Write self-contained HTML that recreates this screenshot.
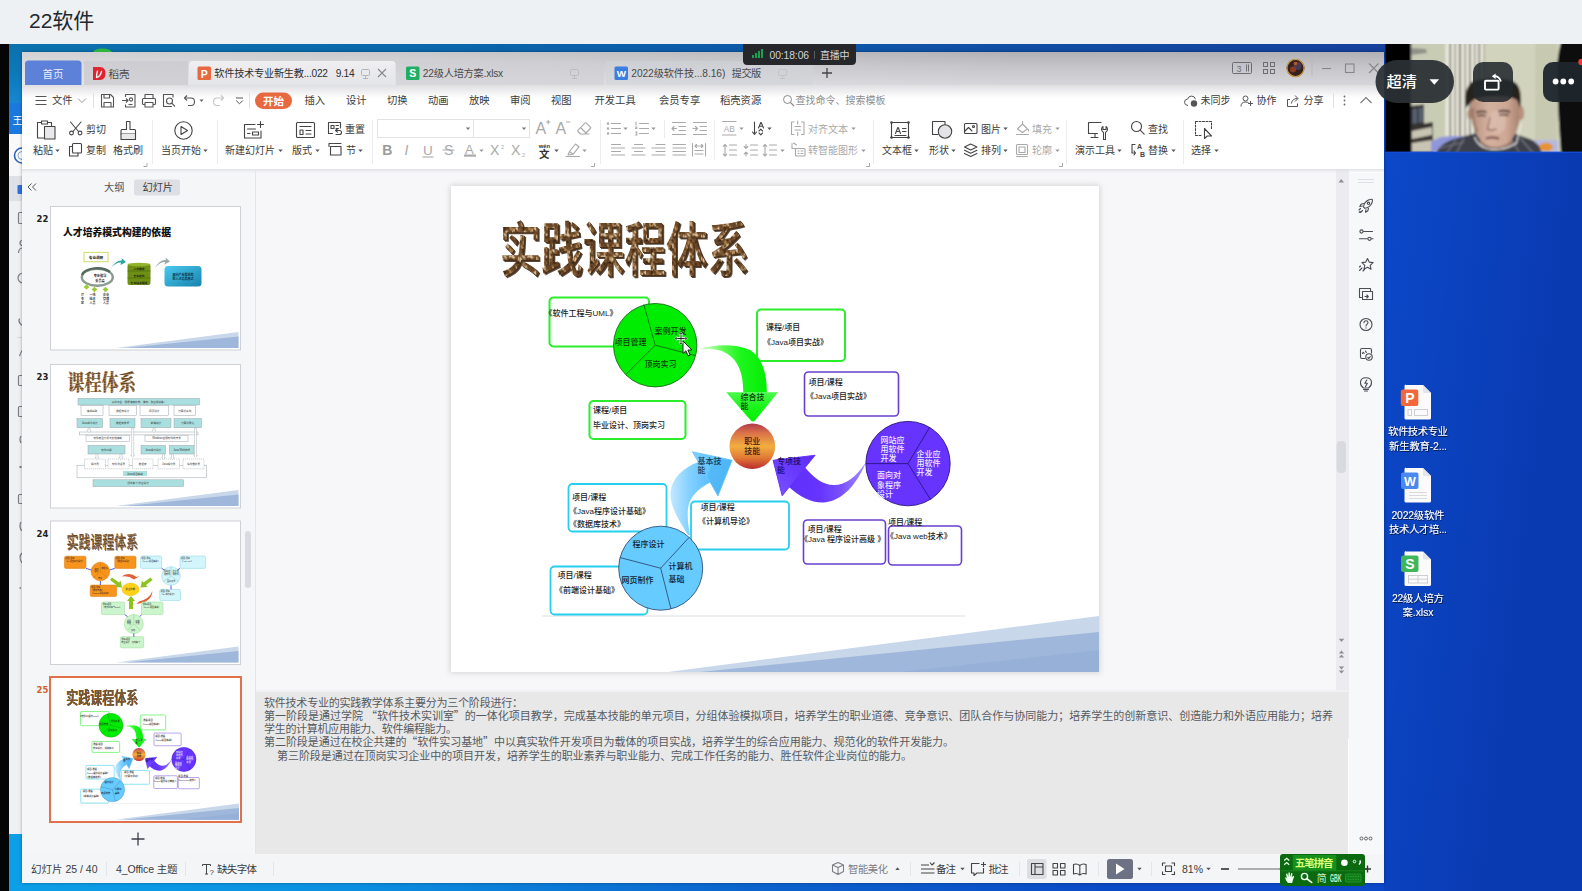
<!DOCTYPE html>
<html lang="zh-CN">
<head>
<meta charset="utf-8">
<title>22软件</title>
<style>
*{box-sizing:border-box;margin:0;padding:0}
html,body{width:1582px;height:891px;overflow:hidden;background:#edf1f4}
body{position:relative;font-family:"Liberation Sans","Noto Sans CJK SC",sans-serif;color:#333;font-size:11px;line-height:1}
.abs{position:absolute}
.t{position:absolute;white-space:nowrap;line-height:1}
svg{position:absolute;overflow:visible}
#topbar{left:0;top:0;width:1582px;height:44px;background:#edf1f4}
#topbar .ttl{left:29px;top:10px;font-size:21px;color:#23272e;letter-spacing:0}
#video{left:0;top:44px;width:1582px;height:847px;background:linear-gradient(97deg,#0c49ca 0,#0c49ca 1380px,#0b43c0 1460px,#0a3ab2 1582px);overflow:hidden}
#blk{left:0;top:0;width:9px;height:847px;background:#050505}
#desk-top{left:9px;top:0;width:1377px;height:14px;background:linear-gradient(90deg,#0b72ad 0%,#0b68ab 30%,#0e55a8 60%,#15409c 100%)}
#desk-left{left:9px;top:0;width:14px;height:790px;background:linear-gradient(180deg,#0b70ad 0,#0d79bb 30px,#1687d2 59px,#1b78de 59px,#1b78de 90px,#fafafb 90px,#f6f6f8 132px,#dfe0e5 132px,#dfe0e5 157px,#eff0f2 157px,#eff0f2 100%)}
#desk-left2{left:9px;top:790px;width:14px;height:57px;background:#0c9ee6}
#desk-bot{left:9px;top:838px;width:1375px;height:9px;background:linear-gradient(90deg,#0c9fe7 0%,#0b8fe0 25%,#0b62cc 55%,#0b4ac6 80%,#0c49ca 100%)}
#wps{left:22px;top:8px;width:1362px;height:831px;background:#fff;overflow:hidden;box-shadow:0 0 3px rgba(0,0,0,.35)}
#titlebar{left:0;top:0;width:1362px;height:36px;background:linear-gradient(90deg,rgba(255,255,255,.42) 0,rgba(255,255,255,.3) 400px,rgba(255,255,255,0) 1000px),linear-gradient(180deg,#b1b1b5 0%,#c5c5c9 40%,#d9d9dd 100%)}
#menubar{left:0;top:36px;width:1362px;height:28px;background:#fff}
#ribbon{left:0;top:64px;width:1362px;height:53px;background:#fff}
#ribshadow{left:0;top:117px;width:1362px;height:4px;background:linear-gradient(180deg,#e1e2e6,rgba(245,246,248,0))}
#leftpanel{left:0;top:117px;width:233px;height:685px;background:#f5f6f8}
#edit{left:233px;top:117px;width:1081px;height:685px;background:#f7f7f9;border-left:1px solid #e6e6e9}
#vscroll{left:1314px;top:117px;width:13px;height:570px;background:#ececf0}
#rside{left:1327px;top:121px;width:35px;height:681px;background:#f7f8fa}
#notes{left:234px;top:638px;width:1092px;height:164px;background:#e8e8e9;border-top:2px solid #f1f1f3}
#status{left:0;top:802px;width:1362px;height:29px;background:#f4f5f7}
#slide{left:429px;top:134px;width:648px;height:486px;background:#fff;box-shadow:0 0 6px 1px rgba(0,0,0,.14)}
</style>
</head>
<body>
<div id="topbar" class="abs"><div class="t ttl">22软件</div></div>
<div id="video" class="abs">
<div id="blk" class="abs"></div>
<div id="desk-top" class="abs"></div>
<div id="desk-left" class="abs"></div>
<svg width="14" height="800" viewBox="9 44 14 800" style="left:9px;top:0"><text x="12.500" y="123.500" font-size="10" fill="#fff" font-family="Liberation Sans, Noto Sans CJK SC, sans-serif">王</text><circle cx="22" cy="155.500" r="7.500" fill="#fff" stroke="#2a62b8" stroke-width="1.600"/><circle cx="22" cy="155.500" r="4" fill="none" stroke="#7a9ad0" stroke-width="1"/><rect x="17.500" y="185" width="6" height="9" rx="1" fill="#2f6fe0"/><g fill="none" stroke="#7b7d84" stroke-width="1.200"><rect x="18.500" y="212.500" width="6" height="11" rx="1"/><circle cx="22.500" cy="243" r="2.500"/><path d="M18.500,253q0,-5 4.500,-5"/><circle cx="23" cy="278" r="5"/><path d="M19.500,318.500q-1.500,3 1,5.500l2,1.500"/><path d="M19.500,356q1.500,-4 3,-6"/><rect x="18.500" y="375.500" width="6" height="10" rx="1"/><rect x="18.500" y="406.500" width="6" height="10" rx="1"/><path d="M21,436q-2,3 0,7"/><path d="M19.500,467h2" stroke-width="2"/><rect x="18.500" y="494.500" width="6" height="9" rx="1"/><path d="M21,522q-2,3 0,8l3,1"/><path d="M22,553q-4,4 0,10"/><path d="M19.500,588h1.500" stroke-width="1.600"/></g><path d="M17,337.500h6" stroke="#d8d9dd" stroke-width="1"/></svg>
<div id="desk-left2" class="abs"></div>
<div id="desk-bot" class="abs"></div>
<div id="wps" class="abs">
<div id="titlebar" class="abs"></div>
<div id="menubar" class="abs"></div>
<div id="ribbon" class="abs"></div>
<div id="leftpanel" class="abs"></div>
<div id="edit" class="abs"></div>
<div id="vscroll" class="abs"></div>
<div id="rside" class="abs"></div>
<div id="notes" class="abs"></div>
<div id="status" class="abs"></div>
<div id="ribshadow" class="abs"></div>
<div id="slide" class="abs"></div>
</div><!--/wps-->
</div><!--/video-->
<svg width="1582" height="891" viewBox="0 0 1582 891" style="left:0;top:0" font-family="Liberation Sans, Noto Sans CJK SC, sans-serif">
<defs><linearGradient id="mbg" x1="0" y1="0" x2="0" y2="1"><stop offset="0" stop-color="#dfdfe2"/><stop offset="1" stop-color="#ffffff"/></linearGradient><linearGradient id="atab" x1="0" y1="0" x2="0" y2="1"><stop offset="0" stop-color="#efeff2"/><stop offset="1" stop-color="#e4e5e8"/></linearGradient></defs>
<rect x="22" y="85" width="1362" height="13" fill="url(#mbg)"/>
<path d="M25,85V64q0,-3.5 3.500,-3.500H78q3.500,0 3.500,3.500V85z" fill="#5d80d8"/>
<text x="53" y="77.5" font-size="10.5" fill="#e9eefc" text-anchor="middle">首页</text>
<rect x="84" y="61" width="104" height="24" fill="#c9cacf" opacity=".75"/>
<path d="M93,67h7q5.500,0 5.500,6.500t-5.500,6.500h-7z" fill="#e0242f"/>
<path d="M96.500,77.500c0,-3 .5,-5 1,-6.500M96.800,77.500c1.500,-.5 4,-2.500 4.700,-6.200" stroke="#fff" stroke-width="1.300" fill="none" stroke-linecap="round"/>
<text x="108.5" y="77.5" font-size="10.5" fill="#4a4a4a">稻壳</text>
<path d="M189,85V64.500q0,-3.500 3.500,-3.500H392q3.500,0 3.500,3.500V85z" fill="url(#atab)"/>
<rect x="197.500" y="66.500" width="13.500" height="13.500" rx="1.500" fill="#e8683f"/>
<text x="204.3" y="77.5" font-size="10.5" fill="#fff" font-weight="bold" text-anchor="middle">P</text>
<text x="214.3" y="77.3" font-size="10.2" fill="#2f2f2f" textLength="113.7" lengthAdjust="spacing">软件技术专业新生教...022</text>
<text x="335.8" y="77.3" font-size="10.2" fill="#2f2f2f" textLength="18.8" lengthAdjust="spacing">9.14</text>
<g stroke="#b4b5ba" stroke-width="1" fill="none"><rect x="361.500" y="69.500" width="8" height="6" rx="1"/><path d="M365.500,75.500v2.500M363,78.500h5"/></g>
<path d="M378,69l8,8M386,69l-8,8" stroke="#8a8a8a" stroke-width="1.100"/>
<rect x="396" y="61" width="208" height="24" fill="#cdced3" opacity=".55"/>
<rect x="406" y="66.500" width="13.500" height="13.500" rx="1.500" fill="#1fae64"/>
<text x="412.8" y="77.4" font-size="10.5" fill="#fff" font-weight="bold" text-anchor="middle">S</text>
<text x="422.7" y="77.3" font-size="10.2" fill="#4a4a4a" textLength="80.5" lengthAdjust="spacing">22级人培方案.xlsx</text>
<g stroke="#bcbdc2" stroke-width="1" fill="none"><rect x="570.500" y="69.500" width="8" height="6" rx="1"/><path d="M574.500,75.500v2.500M572,78.500h5"/></g>
<rect x="606" y="61" width="207" height="24" fill="#d2d3d8" opacity=".55"/>
<rect x="614.500" y="66.500" width="13.500" height="13.500" rx="1.500" fill="#3b7ee2"/>
<text x="621.3" y="77.3" font-size="9.8" fill="#fff" font-weight="bold" text-anchor="middle">W</text>
<text x="631.3" y="77.3" font-size="10.2" fill="#4a4a4a" textLength="94" lengthAdjust="spacing">2022级软件技...8.16)</text>
<text x="731.8" y="77.3" font-size="10.2" fill="#4a4a4a" textLength="29.4" lengthAdjust="spacing">提交版</text>
<g stroke="#c3c4c9" stroke-width="1" fill="none"><rect x="778.500" y="69.500" width="8" height="6" rx="1"/><path d="M782.500,75.500v2.500M780,78.500h5"/></g>
<path d="M822,73h10M827,68v10" stroke="#44464c" stroke-width="1.300"/>
<g stroke="#6d6e74" stroke-width="1" fill="none"><rect x="1232.500" y="62.500" width="19" height="11" rx="1"/><path d="M1246.500,64.500v7M1248.500,64.500v7"/></g>
<text x="1236.5" y="72" font-size="9" fill="#6d6e74">3</text>
<g stroke="#6d6e74" stroke-width="1" fill="none"><rect x="1263.500" y="62.500" width="4" height="4"/><rect x="1270.500" y="62.500" width="4" height="4"/><rect x="1263.500" y="69.500" width="4" height="4"/><rect x="1270.500" y="69.500" width="4" height="4"/></g>
<circle cx="1295.500" cy="68" r="9" fill="#35201c"/><circle cx="1295.500" cy="68" r="8.600" fill="none" stroke="#c79a4a" stroke-width="1.300"/><circle cx="1297.500" cy="66" r="4" fill="#4a3a55"/><circle cx="1293" cy="69.500" r="3" fill="#8a3a22"/><circle cx="1295.500" cy="63.500" r="1.800" fill="#b5582a"/>
<path d="M1312,60v16" stroke="#b9b9bd" stroke-width="1"/>
<path d="M1322,68.500h9" stroke="#85868c" stroke-width="1.100"/>
<rect x="1345.500" y="64" width="8.500" height="8.500" fill="none" stroke="#85868c" stroke-width="1.100"/>
<path d="M1369,63.500l9.500,9.500M1378.500,63.500l-9.500,9.500" stroke="#85868c" stroke-width="1.100"/>
<path d="M35.500,96.500h11M35.500,100.500h11M35.500,104.500h11" stroke="#555" stroke-width="1.100"/>
<text x="52" y="104.3" font-size="10.3" fill="#3b3b3b">文件</text>
<path d="M78,98.500l4,4l4,-4" stroke="#999" stroke-width="1" fill="none"/>
<path d="M93.500,93v15M249.500,93v15" stroke="#e2e2e5" stroke-width="1"/>
<g stroke="#555" stroke-width="1.100" fill="none" stroke-linejoin="round"><path d="M101.500,94.500h9l3,3v9.500h-12z"/><path d="M104,94.500v3.500h5.500v-3.500M104,107v-4.500h7v4.500"/><path d="M125.500,97v-2.500h9.500v12.500h-9.500v-2.500"/><path d="M122,100.500h6M126,98.500l2,2l-2,2"/><circle cx="131" cy="99.500" r="1.600"/><path d="M128.500,104.500h4"/><path d="M145,98.500v-4h8v4"/><rect x="142.500" y="98.500" width="13" height="6" rx="1"/><path d="M145,102.500h8v4.500h-8z" fill="#fff"/><path d="M172,106.500h-8.500v-12h9.500v3"/><circle cx="169.500" cy="101" r="3"/><path d="M171.700,103.200l3.300,3.300"/><path d="M187,95.500l-2.500,2.500l2.500,2.500"/><path d="M185,98h6q3.500,0 3.500,3.800t-3.500,3.700h-3"/></g>
<path d="M199.5,99.5h4l-2,2.4z" fill="#666"/>
<g stroke="#c4c4c4" stroke-width="1.100" fill="none" stroke-linejoin="round"><path d="M221,95.500l2.500,2.500l-2.500,2.500"/><path d="M223,98h-6q-3.500,0 -3.500,3.800t3.500,3.700h3"/></g>
<path d="M236,98h7" stroke="#555" stroke-width="1"/><path d="M236.200,100.500l3.300,3.300l3.300,-3.300" stroke="#555" stroke-width="1" fill="none"/>
<rect x="255" y="92.500" width="37" height="16.500" rx="8.250" fill="#e8683f"/>
<text x="273.5" y="104.5" font-size="10.5" fill="#fff" font-weight="bold" text-anchor="middle">开始</text>
<text x="304.5" y="104.3" font-size="10.3" fill="#3b3b3b">插入</text>
<text x="346" y="104.3" font-size="10.3" fill="#3b3b3b">设计</text>
<text x="387" y="104.3" font-size="10.3" fill="#3b3b3b">切换</text>
<text x="428" y="104.3" font-size="10.3" fill="#3b3b3b">动画</text>
<text x="469" y="104.3" font-size="10.3" fill="#3b3b3b">放映</text>
<text x="510" y="104.3" font-size="10.3" fill="#3b3b3b">审阅</text>
<text x="551" y="104.3" font-size="10.3" fill="#3b3b3b">视图</text>
<text x="594.5" y="104.3" font-size="10.3" fill="#3b3b3b">开发工具</text>
<text x="659" y="104.3" font-size="10.3" fill="#3b3b3b">会员专享</text>
<text x="720" y="104.3" font-size="10.3" fill="#3b3b3b">稻壳资源</text>
<circle cx="787.500" cy="99.500" r="4" stroke="#8b8b8b" stroke-width="1" fill="none"/><path d="M790.500,102.500l3.500,3.500" stroke="#8b8b8b" stroke-width="1.100"/>
<text x="795.5" y="104.3" font-size="10" fill="#8d8d8d">查找命令、搜索模板</text>
<g stroke="#555" stroke-width="1" fill="none"><path d="M1188,105.500q-3.500,-.3 -3.500,-3.300q0,-2.800 3,-3.100q1,-3 4,-3q3.300,0 4,3.200"/><circle cx="1194" cy="103.500" r="3.200" fill="#555" stroke="none"/></g>
<text x="1200.5" y="104.3" font-size="10" fill="#3b3b3b">未同步</text>
<g stroke="#555" stroke-width="1" fill="none"><circle cx="1245.500" cy="98.500" r="2.500"/><path d="M1241,106.500q0,-4.500 4.500,-4.500q2.500,0 3.500,1.500M1250.500,101v5M1248,103.500h5"/></g>
<text x="1256.5" y="104.3" font-size="10" fill="#3b3b3b">协作</text>
<g stroke="#555" stroke-width="1" fill="none" stroke-linejoin="round"><path d="M1290,99.500h-2.500v7h10v-3"/><path d="M1291.500,103.500q.5,-5 6,-5M1295,95.500l3,3l-3,3"/></g>
<text x="1303.5" y="104.3" font-size="10" fill="#3b3b3b">分享</text>
<path d="M1333.500,93v15" stroke="#e2e2e5"/>
<circle cx="1344.500" cy="96.500" r=".9" fill="#666"/><circle cx="1344.500" cy="100.500" r=".9" fill="#666"/><circle cx="1344.500" cy="104.500" r=".9" fill="#666"/>
<path d="M1360.500,103l5.500,-5.500l5.500,5.500" stroke="#777" stroke-width="1.100" fill="none"/>
<g stroke="#444" stroke-width="1.100" fill="none" stroke-linejoin="round" stroke-linecap="round"><path d="M41,122.500h-3.500v15.500h6"/><path d="M41.500,121h6v3h-6z"/><path d="M48,122.500h3.500v3"/><rect x="44.500" y="126.500" width="10.500" height="12.500" fill="#e9e9ec"/></g>
<text x="33" y="154" font-size="10" fill="#3b3b3b">粘贴</text>
<path d="M55.3,149.4h4.4l-2.2,2.64z" fill="#555"/>
<g stroke="#444" stroke-width="1.100" fill="none" stroke-linejoin="round" stroke-linecap="round"><path d="M70.500,122l8,9.500M81,122l-8,9.500"/><circle cx="71.500" cy="133" r="1.900"/><circle cx="80" cy="133" r="1.900"/></g>
<text x="86" y="132.5" font-size="10" fill="#3b3b3b">剪切</text>
<g stroke="#444" stroke-width="1.100" fill="none" stroke-linejoin="round" stroke-linecap="round"><rect x="72.500" y="143.500" width="9" height="9.500" rx="1" /><path d="M72.500,146.500h-3v9.500h8.500v-3"/></g>
<text x="86" y="154" font-size="10" fill="#3b3b3b">复制</text>
<g stroke="#444" stroke-width="1.100" fill="none" stroke-linejoin="round" stroke-linecap="round"><path d="M126.500,121.500h3.500v8h4.500q1,0 1,1v3.500h-14.500v-3.500q0,-1 1,-1h4.500z"/><path d="M121,134v5.500h14.500v-5.500" fill="#e9e9ec"/></g>
<text x="113" y="154" font-size="10" fill="#3b3b3b">格式刷</text>
<path d="M143.500,166.500h3.500v-3.500" stroke="#aaa" fill="none"/>
<path d="M152.500,120v44M217.500,120v44M372.500,120v44M600.500,120v44M873.500,120v44M1066.500,120v44M1183.500,120v44" stroke="#ececef" stroke-width="1"/>
<g stroke="#444" stroke-width="1.100" fill="none" stroke-linejoin="round" stroke-linecap="round"><circle cx="183.500" cy="130.500" r="8.700"/><path d="M181,126.500v8l6.500,-4z"/></g>
<text x="161" y="154" font-size="10" fill="#3b3b3b">当页开始</text>
<path d="M203.3,149.4h4.4l-2.2,2.64z" fill="#555"/>
<g stroke="#444" stroke-width="1.100" fill="none" stroke-linejoin="round" stroke-linecap="round"><path d="M255,124.500h-10.500v13.500h16.500v-7"/><path d="M247.500,129h8M247.500,133.500h2.500M252.500,132h6v3h-6z"/><path d="M257.500,124.500h6M260.500,121.500v6"/></g>
<text x="225" y="154" font-size="10" fill="#3b3b3b">新建幻灯片</text>
<path d="M278.3,149.4h4.4l-2.2,2.64z" fill="#555"/>
<g stroke="#444" stroke-width="1.100" fill="none" stroke-linejoin="round" stroke-linecap="round"><rect x="296.500" y="122.500" width="18" height="15" rx="1"/><path d="M300,126.500h11M300,130h3v4.500h-3zM306,130.500h5M306,134h5"/></g>
<text x="292" y="154" font-size="10" fill="#3b3b3b">版式</text>
<path d="M315.3,149.4h4.4l-2.2,2.64z" fill="#555"/>
<g stroke="#444" stroke-width="1.100" fill="none" stroke-linejoin="round" stroke-linecap="round"><path d="M340.500,128v-5.500h-12v11h4"/><path d="M331,125.500h3v3h-3zM336,125.500h2.500M336,128.500h2.500"/><path d="M336,134.500h3.500q2,0 2,-2t-2,-2h-3.500M337.500,128.800l-2,1.700l2,1.700"/></g>
<text x="345" y="132.5" font-size="10" fill="#3b3b3b">重置</text>
<g stroke="#444" stroke-width="1.100" fill="none" stroke-linejoin="round" stroke-linecap="round"><rect x="330.500" y="146.500" width="10.500" height="8.500"/><path d="M329,143.500h3.500M333.500,143.500h7.500M329,143.500v3"/></g>
<text x="346" y="154" font-size="10" fill="#3b3b3b">节</text>
<path d="M358.3,149.4h4.4l-2.2,2.64z" fill="#555"/>
<rect x="377.500" y="119.500" width="96" height="18" fill="#fff" stroke="#e3e3e6"/><rect x="473.500" y="119.500" width="56" height="18" fill="#fff" stroke="#e3e3e6"/>
<path d="M465.8,127.4h4.4l-2.2,2.64z" fill="#777"/>
<path d="M521.8,127.4h4.4l-2.2,2.64z" fill="#777"/>
<text x="535.5" y="134.3" font-size="16" fill="#a9a9a9" font-family="Liberation Sans, sans-serif">A</text>
<text x="555.5" y="134.3" font-size="16" fill="#a9a9a9" font-family="Liberation Sans, sans-serif">A</text>
<g stroke="#a9a9a9" stroke-width="1.100" fill="none" stroke-linejoin="round" stroke-linecap="round"><path d="M546.500,122h3.500M548.200,120.300v3.500"/><path d="M566.500,122h3.500"/><path d="M582,134h-1.500l-2.500,-2.500q-.7,-.7 0,-1.400l7,-7q.7,-.7 1.400,0l4,4q.7,.7 0,1.400l-5.500,5.500h-3M580.500,127.500l5,5M582,134h7"/></g>
<text x="382.3" y="155.3" font-size="14" fill="#9a9a9a" font-weight="bold" font-family="Liberation Sans, sans-serif">B</text>
<text x="404.5" y="155.3" font-size="14" fill="#a9a9a9" font-style="italic" font-family="Liberation Sans, sans-serif">I</text>
<text x="423" y="154.8" font-size="13.5" fill="#a9a9a9" font-family="Liberation Sans, sans-serif">U</text>
<path d="M422.500,157h11" stroke="#a9a9a9" stroke-width="1.100"/>
<text x="444" y="155.3" font-size="14" fill="#a9a9a9" font-family="Liberation Sans, sans-serif">S</text>
<path d="M442.500,150h12" stroke="#a9a9a9" stroke-width="1"/>
<text x="465" y="153.8" font-size="13" fill="#a9a9a9" font-family="Liberation Sans, sans-serif">A</text>
<text x="490" y="155.3" font-size="14" fill="#a9a9a9" font-family="Liberation Sans, sans-serif">X</text>
<text x="511" y="155.3" font-size="14" fill="#a9a9a9" font-family="Liberation Sans, sans-serif">X</text>
<rect x="464" y="154.500" width="12" height="2.200" fill="#a9a9a9"/>
<path d="M479.3,149.4h4.4l-2.2,2.64z" fill="#999"/>
<text x="501" y="149" font-size="5.5" fill="#a9a9a9">2</text>
<text x="522" y="157" font-size="5.5" fill="#a9a9a9">2</text>
<text x="544.3" y="148.3" font-size="5.8" fill="#333" font-weight="bold" text-anchor="middle">wén</text>
<text x="544.3" y="157.8" font-size="10.5" fill="#333" font-weight="bold" text-anchor="middle">文</text>
<path d="M554.3,149.4h4.4l-2.2,2.64z" fill="#555"/>
<g stroke="#a9a9a9" stroke-width="1.100" fill="none" stroke-linejoin="round" stroke-linecap="round"><path d="M569.500,151.500l6,-7.500l3.500,2.800l-6,7.500zM569.500,151.500l-1.500,3.500l4.500,-.8"/><path d="M566,156.500h13.500"/></g>
<path d="M582.3,149.4h4.4l-2.2,2.64z" fill="#999"/>
<path d="M591,166.500h3.500v-3.500M866,166.500h3.500v-3.500M1059,166.500h3.500v-3.500" stroke="#aaa" fill="none"/>
<g stroke="#a9a9a9" stroke-width="1.100" fill="none" stroke-linejoin="round" stroke-linecap="round"><path d="M611.500,123.500h9M611.500,128.500h9M611.500,133.500h9"/><circle cx="608" cy="123.500" r=".7"/><circle cx="608" cy="128.500" r=".7"/><circle cx="608" cy="133.500" r=".7"/><path d="M639.500,123.500h9M639.500,128.500h9M639.500,133.500h9"/><path d="M636,122v3M635.500,127h1.300v1.500h-1.300M635.500,132h1.300v3h-1.300"/><path d="M672.500,122.500h13M679,126.500h6.500M679,130.500h6.500M672.500,134.500h13M676.500,128.500h-4.500M674,126.500l-2,2l2,2"/><path d="M693.500,122.500h13M700,126.500h6.500M700,130.500h6.500M693.500,134.500h13M693,128.500h4.500M695.500,126.500l2,2l-2,2"/><path d="M611.500,144.500h9M611.500,148h13M611.500,151.500h9M611.500,155h13"/><path d="M634.500,144.500h8M632,148h13M634.500,151.500h8M632,155h13"/><path d="M656,144.500h9M652,148h13M656,151.500h9M652,155h13"/><path d="M673,144.500h12.500M673,148h12.500M673,151.500h12.500M673,155h12.500"/><path d="M692.500,143.500v12.500M705.500,143.500v12.500M695,146h8M696.500,144.500l-1.500,1.500l1.500,1.500M701.500,144.500l1.500,1.500l-1.500,1.500M695,150.500h8M695,154h8"/><path d="M722.500,121.500h13.500M722.500,135h13.500"/><path d="M729.500,145h7M729.500,150h7M729.500,155h7M725,144.500v11.500M723.200,146.300l1.800,-1.800l1.800,1.800M723.200,154.200l1.800,1.800l1.800,-1.800"/><path d="M750.500,145h7M750.500,150h7M750.500,155h7M746,144.500v4M744.200,146.500l1.800,1.800l1.800,-1.800M746,156v-4M744.200,154l1.800,-1.800l1.800,1.800"/><path d="M769.500,145h7M769.500,150h7M769.500,155h7M765,144.500v11.500M763.200,146.300l1.800,-1.800l1.800,1.800M763.200,154.200l1.800,1.800l1.800,-1.800"/><path d="M794,122h-2.500v12.500h2.500M801.500,122h2.500v12.500h-2.500M795,126.500h5.500M795,130h5.500M797.700,121v3M797.700,135.500v-3"/><path d="M792,143.500v5h4M793.500,143l3,2" /><rect x="795.500" y="148.500" width="9.500" height="7.500" rx="1"/><path d="M798,151h1M801,151h2M798,153.500h1M801,153.500h2"/></g>
<text x="723.8" y="132.3" font-size="8.3" fill="#a9a9a9">AB</text>
<path d="M623.3,127.4h4.4l-2.2,2.64z" fill="#999"/>
<path d="M651.3,127.4h4.4l-2.2,2.64z" fill="#999"/>
<path d="M739.3,127.4h4.4l-2.2,2.64z" fill="#999"/>
<path d="M780.3,149.4h4.4l-2.2,2.64z" fill="#999"/>
<path d="M664.500,120v18M714.500,120v40" stroke="#ececef"/>
<g stroke="#444" stroke-width="1.100" fill="none" stroke-linejoin="round" stroke-linecap="round"><path d="M754.500,122v12M752.500,132l2,2.300l2,-2.300"/><path d="M758.500,128l2.300,-5.500h.4l2.300,5.500M759.300,126.300h3.300"/><path d="M759,131l1.800,-1.800l1.800,1.800M759,133l1.800,1.800l1.800,-1.800"/></g>
<path d="M767.3,127.4h4.4l-2.2,2.64z" fill="#555"/>
<text x="808" y="132.5" font-size="10" fill="#a9a9a9">对齐文本</text>
<path d="M851.3,127.4h4.4l-2.2,2.64z" fill="#999"/>
<text x="808" y="154" font-size="10" fill="#a9a9a9">转智能图形</text>
<path d="M861.3,149.4h4.4l-2.2,2.64z" fill="#999"/>
<g stroke="#444" stroke-width="1.100" fill="none" stroke-linejoin="round" stroke-linecap="round"><rect x="891.500" y="122.500" width="17" height="15"/><path d="M895.500,133.500l2.300,-6h.4l2.300,6M896.300,131.500h3.400M902.500,128.500h3.500M902.500,131.500h3.500M895,135.500h11"/></g>
<g fill="#444"><circle cx="891.500" cy="122.500" r="1.300"/><circle cx="908.500" cy="122.500" r="1.300"/><circle cx="891.500" cy="137.500" r="1.300"/><circle cx="908.500" cy="137.500" r="1.300"/></g>
<text x="882" y="154" font-size="10" fill="#3b3b3b">文本框</text>
<path d="M914.3,149.4h4.4l-2.2,2.64z" fill="#555"/>
<g stroke="#444" stroke-width="1.100" fill="none" stroke-linejoin="round" stroke-linecap="round"><path d="M938,134.500h-5.500v-13h12.500v3"/><circle cx="945" cy="131.500" r="6.700" fill="#e3e3e8"/></g>
<text x="929" y="154" font-size="10" fill="#3b3b3b">形状</text>
<path d="M951.3,149.4h4.4l-2.2,2.64z" fill="#555"/>
<g stroke="#444" stroke-width="1.100" fill="none" stroke-linejoin="round" stroke-linecap="round"><rect x="964.500" y="123.500" width="12.500" height="10" rx="1"/><path d="M964.500,131.500l4,-4l3.500,3.500"/><circle cx="973.500" cy="126.500" r="1"/></g>
<text x="981" y="132.5" font-size="10" fill="#3b3b3b">图片</text>
<path d="M1003.3,127.4h4.4l-2.2,2.64z" fill="#555"/>
<g stroke="#444" stroke-width="1.100" fill="none" stroke-linejoin="round" stroke-linecap="round"><path d="M964.500,147l6.200,-3l6.200,3l-6.200,3zM964.500,150.200l6.200,3l6.200,-3M964.500,153.400l6.200,3l6.200,-3"/></g>
<text x="981" y="154" font-size="10" fill="#3b3b3b">排列</text>
<path d="M1003.3,149.4h4.4l-2.2,2.64z" fill="#555"/>
<g stroke="#a9a9a9" stroke-width="1.100" fill="none" stroke-linejoin="round" stroke-linecap="round"><path d="M1017.500,129l5,-5l5,5l-5,3.500zM1022.500,124v-2.500M1028.500,129.500v1.500"/><path d="M1016.500,134.500h12"/></g>
<text x="1032" y="132.5" font-size="10" fill="#a9a9a9">填充</text>
<path d="M1055.3,127.4h4.4l-2.2,2.64z" fill="#999"/>
<g stroke="#a9a9a9" stroke-width="1.100" fill="none" stroke-linejoin="round" stroke-linecap="round"><rect x="1016.500" y="144.500" width="11" height="10" rx="1"/><path d="M1019,147h6v5.500h-6z"/><path d="M1016.500,156.500h11"/></g>
<text x="1032" y="154" font-size="10" fill="#a9a9a9">轮廓</text>
<path d="M1055.3,149.4h4.4l-2.2,2.64z" fill="#999"/>
<g stroke="#444" stroke-width="1.100" fill="none" stroke-linejoin="round" stroke-linecap="round"><path d="M1101,122.500h-12.500v11h9"/><path d="M1095,133.500v4M1091,137.500h7"/><path d="M1103.500,139.500v-7q-2,-1 -2,-3.200q0,-1.800 1.500,-2.800v3h3v-3q1.500,1 1.500,2.800q0,2.200 -2,3.200v7z" fill="#fff"/></g>
<text x="1075" y="154" font-size="10" fill="#3b3b3b">演示工具</text>
<path d="M1117.3,149.4h4.4l-2.2,2.64z" fill="#555"/>
<g stroke="#444" stroke-width="1.100" fill="none" stroke-linejoin="round" stroke-linecap="round"><circle cx="1136.500" cy="126.500" r="5"/><path d="M1140.200,130.200l4,4"/></g>
<text x="1148" y="132.5" font-size="10" fill="#3b3b3b">查找</text>
<g stroke="#444" stroke-width="1.100" fill="none" stroke-linejoin="round" stroke-linecap="round"><path d="M1135,144.500h-3v8.500h2.500M1134,151l1.500,2l-1.500,2"/></g>
<text x="1137" y="149" font-size="7" fill="#444" font-weight="bold">A</text>
<text x="1140" y="157" font-size="7" fill="#444" font-weight="bold">B</text>
<text x="1148" y="154" font-size="10" fill="#3b3b3b">替换</text>
<path d="M1171.3,149.4h4.4l-2.2,2.64z" fill="#555"/>
<g stroke="#444" stroke-width="1.100" fill="none" stroke-linejoin="round" stroke-linecap="round"><path d="M1195.500,121.500h16v7M1195.500,121.500v14h6" stroke-dasharray="2 1.500"/><path d="M1204.500,128.500v10l2.800,-2.500l4.200,0z" fill="#fff"/></g>
<text x="1191" y="154" font-size="10" fill="#3b3b3b">选择</text>
<path d="M1214.3,149.4h4.4l-2.2,2.64z" fill="#555"/>
</svg>
<svg width="648" height="486" viewBox="0 0 648 486" style="left:451px;top:186px">
<defs>
<linearGradient id="mwood" x1="0" y1="0" x2="0" y2="1"><stop offset="0" stop-color="#6b4423"/><stop offset=".25" stop-color="#b98a58"/><stop offset=".45" stop-color="#7a4f2a"/><stop offset=".65" stop-color="#c39a6b"/><stop offset=".85" stop-color="#6a4120"/><stop offset="1" stop-color="#a77b4c"/></linearGradient>
<pattern id="mtex" width="26" height="22" patternUnits="userSpaceOnUse"><rect width="26" height="22" fill="#6a4827"/><ellipse cx="11.8" cy="12.3" rx="3.0" ry="1.0" fill="#8d6239" transform="rotate(15 11.8 12.3)"/><ellipse cx="4.8" cy="11.3" rx="2.4" ry="1.3" fill="#4a2f16" transform="rotate(100 4.8 11.3)"/><ellipse cx="7.9" cy="2.0" rx="2.8" ry="1.2" fill="#3a2410" transform="rotate(80 7.9 2.0)"/><ellipse cx="25.1" cy="14.4" rx="2.4" ry="0.7" fill="#3a2410" transform="rotate(-10 25.1 14.4)"/><ellipse cx="1.5" cy="4.2" rx="1.5" ry="0.6" fill="#e0c8a0" transform="rotate(60 1.5 4.2)"/><ellipse cx="11.5" cy="18.5" rx="2.1" ry="1.2" fill="#e0c8a0" transform="rotate(-25 11.5 18.5)"/><ellipse cx="17.2" cy="10.1" rx="1.6" ry="1.5" fill="#4a2f16" transform="rotate(30 17.2 10.1)"/><ellipse cx="8.2" cy="5.1" rx="1.6" ry="0.7" fill="#4a2f16" transform="rotate(80 8.2 5.1)"/><ellipse cx="2.8" cy="6.4" rx="1.1" ry="0.6" fill="#3a2410" transform="rotate(15 2.8 6.4)"/><ellipse cx="5.5" cy="20.0" rx="2.0" ry="1.5" fill="#b08352" transform="rotate(80 5.5 20.0)"/><ellipse cx="1.9" cy="13.8" rx="2.7" ry="0.8" fill="#4a2f16" transform="rotate(30 1.9 13.8)"/><ellipse cx="8.6" cy="21.2" rx="2.7" ry="0.7" fill="#d8ba90" transform="rotate(-10 8.6 21.2)"/><ellipse cx="0.3" cy="10.2" rx="2.1" ry="1.2" fill="#d8ba90" transform="rotate(100 0.3 10.2)"/><ellipse cx="13.2" cy="21.7" rx="2.7" ry="1.0" fill="#b08352" transform="rotate(-10 13.2 21.7)"/><ellipse cx="10.3" cy="21.8" rx="1.0" ry="1.4" fill="#432a13" transform="rotate(30 10.3 21.8)"/><ellipse cx="25.9" cy="0.4" rx="1.4" ry="1.5" fill="#432a13" transform="rotate(-10 25.9 0.4)"/><ellipse cx="1.1" cy="3.2" rx="2.0" ry="0.6" fill="#432a13" transform="rotate(60 1.1 3.2)"/><ellipse cx="21.6" cy="8.5" rx="1.2" ry="0.8" fill="#d8ba90" transform="rotate(-25 21.6 8.5)"/><ellipse cx="15.6" cy="8.2" rx="2.0" ry="1.5" fill="#e0c8a0" transform="rotate(0 15.6 8.2)"/><ellipse cx="22.5" cy="4.0" rx="1.3" ry="1.4" fill="#432a13" transform="rotate(15 22.5 4.0)"/><ellipse cx="18.9" cy="3.5" rx="2.4" ry="1.1" fill="#b08352" transform="rotate(100 18.9 3.5)"/><ellipse cx="15.7" cy="9.3" rx="1.2" ry="0.6" fill="#5b3a1c" transform="rotate(15 15.7 9.3)"/><ellipse cx="19.2" cy="8.6" rx="1.9" ry="1.4" fill="#e0c8a0" transform="rotate(30 19.2 8.6)"/><ellipse cx="13.5" cy="20.4" rx="3.1" ry="0.7" fill="#e0c8a0" transform="rotate(-10 13.5 20.4)"/><ellipse cx="7.3" cy="20.2" rx="1.4" ry="0.6" fill="#5b3a1c" transform="rotate(80 7.3 20.2)"/><ellipse cx="11.6" cy="1.3" rx="1.4" ry="0.9" fill="#432a13" transform="rotate(0 11.6 1.3)"/><ellipse cx="2.4" cy="3.0" rx="2.0" ry="0.9" fill="#8d6239" transform="rotate(0 2.4 3.0)"/><ellipse cx="15.3" cy="20.3" rx="2.0" ry="0.9" fill="#5b3a1c" transform="rotate(-25 15.3 20.3)"/><ellipse cx="0.6" cy="14.0" rx="2.1" ry="1.3" fill="#2e1c0c" transform="rotate(0 0.6 14.0)"/><ellipse cx="26.0" cy="1.7" rx="2.2" ry="1.3" fill="#c9a67a" transform="rotate(60 26.0 1.7)"/><ellipse cx="9.1" cy="15.1" rx="3.0" ry="1.4" fill="#b08352" transform="rotate(-25 9.1 15.1)"/><ellipse cx="22.5" cy="12.6" rx="2.4" ry="0.9" fill="#432a13" transform="rotate(-25 22.5 12.6)"/><ellipse cx="15.8" cy="1.8" rx="2.4" ry="1.5" fill="#b08352" transform="rotate(60 15.8 1.8)"/><ellipse cx="10.1" cy="16.2" rx="2.3" ry="1.0" fill="#8d6239" transform="rotate(-10 10.1 16.2)"/><ellipse cx="13.5" cy="11.3" rx="1.7" ry="0.7" fill="#3a2410" transform="rotate(15 13.5 11.3)"/><ellipse cx="24.9" cy="2.5" rx="2.7" ry="1.2" fill="#e0c8a0" transform="rotate(30 24.9 2.5)"/><ellipse cx="23.3" cy="8.1" rx="1.3" ry="1.2" fill="#8d6239" transform="rotate(0 23.3 8.1)"/><ellipse cx="19.6" cy="7.5" rx="3.0" ry="1.0" fill="#d8ba90" transform="rotate(60 19.6 7.5)"/><ellipse cx="10.5" cy="5.5" rx="2.4" ry="1.3" fill="#d8ba90" transform="rotate(15 10.5 5.5)"/><ellipse cx="10.0" cy="12.8" rx="1.7" ry="0.7" fill="#e0c8a0" transform="rotate(60 10.0 12.8)"/><ellipse cx="21.8" cy="18.7" rx="2.6" ry="1.5" fill="#5b3a1c" transform="rotate(0 21.8 18.7)"/><ellipse cx="2.9" cy="10.4" rx="3.0" ry="1.3" fill="#b08352" transform="rotate(100 2.9 10.4)"/><ellipse cx="17.5" cy="15.8" rx="2.9" ry="1.2" fill="#2e1c0c" transform="rotate(-10 17.5 15.8)"/><ellipse cx="21.5" cy="6.1" rx="2.3" ry="1.2" fill="#5b3a1c" transform="rotate(60 21.5 6.1)"/><ellipse cx="8.0" cy="17.4" rx="1.0" ry="0.7" fill="#e0c8a0" transform="rotate(15 8.0 17.4)"/><ellipse cx="0.6" cy="18.3" rx="1.5" ry="0.7" fill="#3a2410" transform="rotate(-10 0.6 18.3)"/><ellipse cx="11.6" cy="13.9" rx="2.4" ry="1.3" fill="#4a2f16" transform="rotate(15 11.6 13.9)"/><ellipse cx="5.2" cy="10.5" rx="1.4" ry="0.6" fill="#e0c8a0" transform="rotate(-25 5.2 10.5)"/><ellipse cx="4.7" cy="6.0" rx="1.8" ry="1.2" fill="#8d6239" transform="rotate(0 4.7 6.0)"/><ellipse cx="10.2" cy="17.4" rx="3.0" ry="0.7" fill="#b08352" transform="rotate(0 10.2 17.4)"/><ellipse cx="11.7" cy="4.3" rx="3.0" ry="0.6" fill="#8d6239" transform="rotate(60 11.7 4.3)"/><ellipse cx="12.1" cy="14.3" rx="1.5" ry="1.2" fill="#4a2f16" transform="rotate(15 12.1 14.3)"/><ellipse cx="6.3" cy="8.6" rx="1.2" ry="0.9" fill="#2e1c0c" transform="rotate(30 6.3 8.6)"/><ellipse cx="23.7" cy="18.8" rx="1.8" ry="0.7" fill="#e0c8a0" transform="rotate(60 23.7 18.8)"/><ellipse cx="14.3" cy="16.9" rx="2.1" ry="0.6" fill="#4a2f16" transform="rotate(80 14.3 16.9)"/><ellipse cx="20.8" cy="3.8" rx="1.7" ry="1.3" fill="#c9a67a" transform="rotate(100 20.8 3.8)"/><ellipse cx="3.9" cy="11.4" rx="2.6" ry="1.4" fill="#e0c8a0" transform="rotate(100 3.9 11.4)"/><ellipse cx="15.1" cy="15.2" rx="2.7" ry="1.0" fill="#8d6239" transform="rotate(30 15.1 15.2)"/><ellipse cx="21.6" cy="12.4" rx="1.4" ry="1.1" fill="#8d6239" transform="rotate(30 21.6 12.4)"/><ellipse cx="8.1" cy="8.4" rx="2.9" ry="1.4" fill="#d8ba90" transform="rotate(30 8.1 8.4)"/></pattern>
<linearGradient id="mga" x1="0" y1="0" x2="1" y2="0"><stop offset="0" stop-color="#b8ffb0" stop-opacity=".55"/><stop offset=".3" stop-color="#6dfc60"/><stop offset=".6" stop-color="#1df61d"/><stop offset="1" stop-color="#04ee04"/></linearGradient>
<linearGradient id="mgh" x1="0" y1="0" x2="0" y2="1"><stop offset="0" stop-color="#4cfb4c"/><stop offset=".45" stop-color="#1ef41e"/><stop offset="1" stop-color="#00f000"/></linearGradient>
<linearGradient id="mba" x1="0" y1="0" x2="1" y2="0"><stop offset="0" stop-color="#c4e8ff"/><stop offset=".45" stop-color="#86d2ff"/><stop offset="1" stop-color="#58beff"/></linearGradient>
<linearGradient id="mbh" x1="0" y1="0" x2="1" y2="0.400"><stop offset="0" stop-color="#7fd0ff"/><stop offset=".5" stop-color="#66c6ff"/><stop offset=".52" stop-color="#55baf8"/><stop offset="1" stop-color="#4db5f5"/></linearGradient>
<linearGradient id="mpa" x1="1" y1="0" x2="0" y2="0"><stop offset="0" stop-color="#a38cff"/><stop offset=".3" stop-color="#7a52ff"/><stop offset=".6" stop-color="#6633ff"/><stop offset="1" stop-color="#6030f8"/></linearGradient><linearGradient id="mph" x1="0" y1="1" x2="1" y2="0"><stop offset="0" stop-color="#7c55ff"/><stop offset=".5" stop-color="#6a3cff"/><stop offset="1" stop-color="#5d2cf4"/></linearGradient>
<linearGradient id="msp" x1="0" y1="0" x2="0" y2="1"><stop offset="0" stop-color="#b03a4a"/><stop offset=".2" stop-color="#d9704a"/><stop offset=".5" stop-color="#f3ae3f"/><stop offset=".75" stop-color="#e27a35"/><stop offset="1" stop-color="#b82a2e"/></linearGradient>
<linearGradient id="mdeco" x1="0" y1="0" x2="1" y2="0"><stop offset="0" stop-color="#c9d7ea"/><stop offset="1" stop-color="#b3c6e3"/></linearGradient>
</defs>
<rect width="648" height="486" fill="#fff"/>
<polygon points="217,486 648,430 648,486" fill="#c9d7ea"/>
<polygon points="249,486 648,446 648,486" fill="#9fb7db"/>
<polygon points="449,486 648,464 648,486" fill="#93add6" opacity=".7"/>
<line x1="91" y1="430" x2="514" y2="430" stroke="#dde0e4" stroke-width="1.200"/>
<g transform="translate(48.5,84.5) scale(0.705,1)" font-family="Noto Sans CJK SC, sans-serif" font-weight="500" font-size="59"><text x="3" y="2.200" fill="#2e1c0e" opacity=".8">实践课程体系</text><text x="1.500" y="1.100" fill="#4a2e16">实践课程体系</text><text x="0" y="0" fill="url(#mtex)">实践课程体系</text></g>
<rect x="98.5" y="111.5" width="99.5" height="49.0" rx="4" fill="#fff" stroke="#2bee2b" stroke-width="2"/>
<rect x="306" y="123.5" width="88" height="51.5" rx="4" fill="#fff" stroke="#2bee2b" stroke-width="2"/>
<rect x="138.5" y="215" width="96.0" height="38" rx="4" fill="#fff" stroke="#2bee2b" stroke-width="2"/>
<rect x="353.5" y="186" width="94.0" height="44" rx="4" fill="#fff" stroke="#6a3fd0" stroke-width="1.6"/>
<rect x="117.5" y="298" width="98.0" height="47.5" rx="4" fill="#fff" stroke="#27cfee" stroke-width="1.8"/>
<rect x="240" y="315.5" width="98" height="48.0" rx="4" fill="#fff" stroke="#27cfee" stroke-width="1.8"/>
<rect x="99.5" y="380.5" width="97.0" height="48.0" rx="4" fill="#fff" stroke="#27cfee" stroke-width="1.8"/>
<rect x="352.5" y="334" width="82.0" height="44" rx="4" fill="#fff" stroke="#6a3fd0" stroke-width="1.6"/>
<rect x="437.5" y="340" width="73.0" height="39" rx="4" fill="#fff" stroke="#6a3fd0" stroke-width="1.6"/>
<path d="M249,162.6C264,158.5 284,157.5 299,164C312,172 316,189 315.8,206.5L292.3,206.5C292.3,186 287,172 271,165C264,163 257,163 249,163.2Z" fill="url(#mga)"/>
<path d="M275.2,206.2L327,206.2L304,234.5Q301.9,236.5 299.8,234.5Z" fill="url(#mgh)"/>
<path d="M237,349C229,336 218,319 219.5,306C221,292 232,282 246.8,276.2L259.3,296.2C246,303 238.5,312 237,322C236,332 237.5,341 239,349Z" fill="url(#mba)"/>
<polygon points="241.4,265.8 281.1,274.2 267,309.9" fill="url(#mbh)" stroke="#62c3fd" stroke-width=".8" stroke-linejoin="round"/>
<path d="M414,277.5C405,291 395,299 383,299C371,299 362,291 353.8,281L337.3,300.5C349,311 360,317 373,316.5C391,315 405,299 414,278.5Z" fill="url(#mpa)"/>
<polygon points="322.1,274.3 364.1,269.3 331.2,309.7" fill="url(#mph)" stroke="#6535fb" stroke-width="1" stroke-linejoin="round"/>
<circle cx="301.3" cy="260.3" r="22.800" fill="url(#msp)"/>
<circle cx="204.2" cy="159.2" r="41.7" fill="#00ec00" stroke="#156b15" stroke-width=".9"/><line x1="204.2" y1="159.2" x2="192.8" y2="118.3" stroke="#156b15" stroke-width=".9"/><line x1="204.2" y1="159.2" x2="244.3" y2="169.5" stroke="#156b15" stroke-width=".9"/><line x1="204.2" y1="159.2" x2="175" y2="188.3" stroke="#156b15" stroke-width=".9"/>
<circle cx="457" cy="277.6" r="42.2" fill="#6633ff" stroke="#2a1680" stroke-width=".9"/><line x1="457" y1="277.6" x2="478.5" y2="241.5" stroke="#2a1680" stroke-width=".9"/><line x1="457" y1="277.6" x2="415" y2="277.6" stroke="#2a1680" stroke-width=".9"/><line x1="457" y1="277.6" x2="479.5" y2="313.5" stroke="#2a1680" stroke-width=".9"/>
<circle cx="209.7" cy="382.2" r="42" fill="#66ccff" stroke="#2d4f78" stroke-width=".9"/><line x1="209.7" y1="382.2" x2="238" y2="351.5" stroke="#2d4f78" stroke-width=".9"/><line x1="209.7" y1="382.2" x2="168.8" y2="371.5" stroke="#2d4f78" stroke-width=".9"/><line x1="209.7" y1="382.2" x2="220" y2="423" stroke="#2d4f78" stroke-width=".9"/>
<g font-family="Liberation Sans, Noto Sans CJK SC, sans-serif" font-weight="500"><text x="93.5" y="129.5" font-size="8" fill="#222">《软件工程与UML》</text><text x="203.5" y="148" font-size="8" fill="#0c3d0c">案例开发</text><text x="163.5" y="158.5" font-size="8" fill="#0c3d0c">项目管理</text><text x="193.5" y="180.5" font-size="8" fill="#0c3d0c">顶岗实习</text><text x="315" y="144" font-size="8" fill="#222">课程/项目</text><text x="312.0" y="158.5" font-size="8" fill="#222">《Java项目实战》</text><text x="357.5" y="198.5" font-size="8" fill="#222">项目/课程</text><text x="355.0" y="212.5" font-size="8" fill="#222">《Java项目实战》</text><text x="142" y="227" font-size="8" fill="#222">课程/项目</text><text x="142" y="241.5" font-size="8" fill="#222">毕业设计、顶岗实习</text><text x="289.5" y="214" font-size="8" fill="#0c3d0c">综合技</text><text x="289.5" y="222.5" font-size="8" fill="#0c3d0c">能</text><text x="301.3" y="258" font-size="8" fill="#3a1a10" text-anchor="middle">职业</text><text x="301.3" y="267.5" font-size="8" fill="#3a1a10" text-anchor="middle">技能</text><text x="246.5" y="278" font-size="8" fill="#173a55">基本技</text><text x="246.5" y="287" font-size="8" fill="#173a55">能</text><text x="326" y="278" font-size="8" fill="#1d0c5c">专项技</text><text x="326" y="287" font-size="8" fill="#1d0c5c">能</text><text x="429.5" y="256.5" font-size="8" fill="#eee8ff">网站应</text><text x="429.5" y="265.7" font-size="8" fill="#eee8ff">用软件</text><text x="429.5" y="274.9" font-size="8" fill="#eee8ff">开发</text><text x="465.5" y="271.0" font-size="8" fill="#eee8ff">企业应</text><text x="465.5" y="280.2" font-size="8" fill="#eee8ff">用软件</text><text x="465.5" y="289.4" font-size="8" fill="#eee8ff">开发</text><text x="426" y="292.0" font-size="8" fill="#eee8ff">面向对</text><text x="426" y="301.5" font-size="8" fill="#eee8ff">象程序</text><text x="426" y="311.0" font-size="8" fill="#eee8ff">设计</text><text x="121" y="313.5" font-size="8" fill="#222">项目/课程</text><text x="118.0" y="327.5" font-size="8" fill="#222">《Java程序设计基础》</text><text x="118.0" y="341" font-size="8" fill="#222">《数据库技术》</text><text x="249.5" y="324" font-size="8" fill="#222">项目/课程</text><text x="247.0" y="338" font-size="8" fill="#222">《计算机导论》</text><text x="181.5" y="360.5" font-size="8" fill="#123">程序设计</text><text x="217.5" y="382.5" font-size="8" fill="#123">计算机</text><text x="217.5" y="396" font-size="8" fill="#123">基础</text><text x="170.5" y="396.5" font-size="8" fill="#123">网页制作</text><text x="106.5" y="392" font-size="8" fill="#222">项目/课程</text><text x="104.0" y="406.5" font-size="8" fill="#222">《前端设计基础》</text><text x="356.5" y="346" font-size="8" fill="#222">项目/课程</text><text x="349.0" y="355.5" font-size="8" fill="#222">《Java 程序设计高级 》</text><text x="437" y="338.5" font-size="8" fill="#222">项目/课程</text><text x="435.0" y="352.5" font-size="8" fill="#222">《Java web技术》</text></g>
<g transform="translate(232,155)"><path d="M0,0v12.500l2.900,-2.700l2.300,5.200l2,-.9l-2.300,-5.100h4z" fill="#fff" stroke="#111" stroke-width=".9"/><path d="M-7,-2.500h10M-2,-7.500v10" stroke="#fff" stroke-width="2.600"/><path d="M-7,-2.500h10M-2,-7.500v10" stroke="#222" stroke-width="1"/><path d="M-8.500,-2.500l2.500,-2v4zM4.500,-2.500l-2.500,-2v4zM-2,-9l-2,2.500h4zM-2,4l-2,-2.500h4z" fill="#222" stroke="#fff" stroke-width=".5"/></g>
</svg>
<svg width="260" height="720" viewBox="0 160 260 720" style="left:0;top:160px" font-family="Liberation Sans, Noto Sans CJK SC, sans-serif">
<defs><pattern id="ttex" width="3" height="2.400" patternUnits="userSpaceOnUse" patternTransform="rotate(-8)"><rect width="3" height="2.400" fill="#6e4a28"/><rect width="3" height=".7" fill="#b08a5c"/><rect width="1.400" height=".6" x="1" y="1.400" fill="#5e3a1c"/></pattern><linearGradient id="cyb" x1="0" y1="0" x2="1" y2="1"><stop offset="0" stop-color="#4cc9f0"/><stop offset="1" stop-color="#1583ad"/></linearGradient></defs>
<path d="M31.500,183.500l-3.500,3.500l3.500,3.500M36,183.500l-3.500,3.500l3.500,3.500" stroke="#555" stroke-width="1" fill="none"/>
<text x="104" y="190.800" font-size="10.200" fill="#555">大纲</text>
<rect x="134" y="179.500" width="46" height="16" rx="2.500" fill="#dddfe4"/>
<text x="142.500" y="190.800" font-size="10.200" fill="#3b3b3b">幻灯片</text>
<rect x="245" y="531" width="6" height="57" rx="3" fill="#dadbe0"/>
<rect x="50.500" y="206.5" width="190" height="143.500" fill="#fff" stroke="#cfd0d4" stroke-width="1"/>
<text x="36.500" y="222.0" font-size="8.600" font-weight="bold" font-family="DejaVu Sans, Liberation Sans, sans-serif" fill="#222" textLength="11.800" lengthAdjust="spacingAndGlyphs">22</text>
<rect x="50.500" y="364.5" width="190" height="143.500" fill="#fff" stroke="#cfd0d4" stroke-width="1"/>
<text x="36.500" y="380.0" font-size="8.600" font-weight="bold" font-family="DejaVu Sans, Liberation Sans, sans-serif" fill="#222" textLength="11.800" lengthAdjust="spacingAndGlyphs">23</text>
<rect x="50.500" y="521" width="190" height="143.500" fill="#fff" stroke="#cfd0d4" stroke-width="1"/>
<text x="36.500" y="536.5" font-size="8.600" font-weight="bold" font-family="DejaVu Sans, Liberation Sans, sans-serif" fill="#222" textLength="11.800" lengthAdjust="spacingAndGlyphs">24</text>
<rect x="50" y="677" width="191" height="145" fill="#fff" stroke="#e0714a" stroke-width="2"/>
<text x="36.500" y="692.5" font-size="8.600" font-weight="bold" font-family="DejaVu Sans, Liberation Sans, sans-serif" fill="#d0602e" textLength="11.800" lengthAdjust="spacingAndGlyphs">25</text>
<polygon points="116,348.0 238.500,332.0 238.500,348.0" fill="#c9d7ea"/><polygon points="126,348.0 238.500,336.5 238.500,348.0" fill="#9fb7db"/>
<text x="63" y="236" font-size="9.800" font-weight="900" fill="#111" textLength="108" lengthAdjust="spacingAndGlyphs" font-family="Noto Sans CJK SC, sans-serif">人才培养模式构建的依据</text>
<rect x="84" y="252.300" width="24" height="9.500" fill="#fff" stroke="#c3d43f" stroke-width=".8"/><text x="96" y="258.800" font-size="3.600" font-weight="bold" fill="#222" text-anchor="middle">专业调研</text>
<ellipse cx="97.300" cy="277.200" rx="15.500" ry="8.500" fill="#fff" stroke="#8a9a90" stroke-width="2.400"/><path d="M82,275a15.500,8.500 0 0 1 28,-3" stroke="#566a60" stroke-width="2.400" fill="none"/>
<text x="100" y="277.300" font-size="3.200" font-weight="bold" fill="#222" text-anchor="middle">专业指导</text><text x="100" y="281.600" font-size="3.200" font-weight="bold" fill="#222" text-anchor="middle">委员会</text>
<rect x="84.5" y="285" width="4" height="4" fill="#9acd32" transform="rotate(45 86.5 287)"/>
<rect x="92.5" y="287.5" width="4" height="4" fill="#9acd32" transform="rotate(45 94.5 289.5)"/>
<rect x="103.5" y="287.5" width="4" height="4" fill="#9acd32" transform="rotate(45 105.5 289.5)"/>
<text x="82.5" y="296.0" font-size="3" font-weight="bold" fill="#333" text-anchor="middle">IT</text>
<text x="82.5" y="300.2" font-size="3" font-weight="bold" fill="#333" text-anchor="middle">专</text>
<text x="82.5" y="304.4" font-size="3" font-weight="bold" fill="#333" text-anchor="middle">家</text>
<text x="92.5" y="296.0" font-size="3" font-weight="bold" fill="#333" text-anchor="middle">一线</text>
<text x="92.5" y="300.2" font-size="3" font-weight="bold" fill="#333" text-anchor="middle">技术</text>
<text x="92.5" y="304.4" font-size="3" font-weight="bold" fill="#333" text-anchor="middle">人员</text>
<text x="106" y="296.0" font-size="3" font-weight="bold" fill="#333" text-anchor="middle">企业</text>
<text x="106" y="300.2" font-size="3" font-weight="bold" fill="#333" text-anchor="middle">管理</text>
<text x="106" y="304.4" font-size="3" font-weight="bold" fill="#333" text-anchor="middle">人员</text>
<path d="M111,268q5,-8 11,-7.500l-.5,-2.500l4.500,4l-5.500,3l.5,-2.500q-5,-.5 -10,5.500z" fill="#2ba3a0"/>
<path d="M155,268q5,-9 11,-8l-.5,-2.500l4.500,4l-5.500,3l.5,-2.500q-5,-.5 -10,6z" fill="#9aa8a8"/>
<rect x="127.500" y="264" width="23" height="21" rx="2" fill="#6e8f14"/><ellipse cx="139" cy="264.500" rx="11.500" ry="1.800" fill="#93b32a"/><path d="M127.500,271h23M127.500,278h23" stroke="#4c6a08" stroke-width=".6"/>
<text x="139" y="269.5" font-size="2.800" fill="#111" font-weight="bold" text-anchor="middle">人才需求</text>
<text x="139" y="276.5" font-size="2.800" fill="#111" font-weight="bold" text-anchor="middle">专业定位</text>
<text x="139" y="283.5" font-size="2.800" fill="#111" font-weight="bold" text-anchor="middle">专业技术领域</text>
<rect x="164.500" y="266" width="37" height="20.500" rx="3.500" fill="url(#cyb)"/><text x="183" y="275.500" font-size="3" font-weight="bold" fill="#0a2a3a" text-anchor="middle">面向产业需求的</text><text x="183" y="279.500" font-size="3" font-weight="bold" fill="#0a2a3a" text-anchor="middle">的人才培养模式</text>
<polygon points="116,506.0 238.500,490.0 238.500,506.0" fill="#c9d7ea"/><polygon points="126,506.0 238.500,494.5 238.500,506.0" fill="#9fb7db"/>
<g transform="translate(67,389.500) scale(.8,1)"><text x=".8" y=".8" font-size="21.500" font-weight="700" font-family="Noto Serif CJK SC, serif" fill="#3a2412" opacity=".4">课程体系</text><text font-size="21.500" font-weight="700" font-family="Noto Serif CJK SC, serif" fill="url(#ttex)">课程体系</text></g>
<rect x="78" y="398.4" width="121.5" height="6.6" fill="#aadfe0" stroke="#9aa4a8" stroke-width="0.5"/>
<text x="139" y="402.7" font-size="2.6" fill="#333" text-anchor="middle">公共平台（思想道德修养、体育、职业规划等）</text>
<rect x="81" y="405.6" width="22" height="9.9" fill="#fff" stroke="#9aa4a8" stroke-width="0.5"/>
<text x="92.0" y="411.5" font-size="2.6" fill="#333" text-anchor="middle">编程基础</text>
<rect x="109" y="405.6" width="27.5" height="9.9" fill="#fff" stroke="#9aa4a8" stroke-width="0.5"/>
<text x="122.75" y="411.5" font-size="2.6" fill="#333" text-anchor="middle">数据库设计</text>
<rect x="140" y="405.6" width="28.5" height="9.9" fill="#fff" stroke="#9aa4a8" stroke-width="0.5"/>
<text x="154.25" y="411.5" font-size="2.6" fill="#333" text-anchor="middle">网页设计</text>
<rect x="174" y="405.6" width="21.5" height="9.9" fill="#fff" stroke="#9aa4a8" stroke-width="0.5"/>
<text x="184.75" y="411.5" font-size="2.6" fill="#333" text-anchor="middle">计算机系统</text>
<rect x="77" y="418.7" width="25.5" height="9.0" fill="#aadfe0" stroke="#9aa4a8" stroke-width="0.5"/>
<text x="89.75" y="424.2" font-size="2.6" fill="#333" text-anchor="middle">Java程序设计</text>
<rect x="110" y="418.7" width="25" height="9.0" fill="#aadfe0" stroke="#9aa4a8" stroke-width="0.5"/>
<text x="122.5" y="424.2" font-size="2.6" fill="#333" text-anchor="middle">数据库技术</text>
<rect x="141" y="418.7" width="30" height="9.0" fill="#aadfe0" stroke="#9aa4a8" stroke-width="0.5"/>
<text x="156.0" y="424.2" font-size="2.6" fill="#333" text-anchor="middle">前端设计</text>
<rect x="174" y="418.7" width="27.5" height="9.0" fill="#aadfe0" stroke="#9aa4a8" stroke-width="0.5"/>
<text x="187.75" y="424.2" font-size="2.6" fill="#333" text-anchor="middle">计算机导论</text>
<rect x="79.5" y="432" width="118.5" height="2.9" fill="#fff" stroke="#9aa4a8" stroke-width="0.5"/>
<rect x="86" y="435.2" width="43.5" height="6.3" fill="#fff" stroke="#9aa4a8" stroke-width="0.5"/>
<text x="107.7" y="439.4" font-size="2.6" fill="#333" text-anchor="middle">软件模型分析与文档编制</text>
<rect x="145" y="435.2" width="43" height="6.3" fill="#fff" stroke="#9aa4a8" stroke-width="0.5"/>
<text x="166.5" y="439.4" font-size="2.6" fill="#333" text-anchor="middle">Windows应用软件的开发</text>
<rect x="88" y="445.5" width="37" height="8.5" fill="#aadfe0" stroke="#9aa4a8" stroke-width="0.5"/>
<text x="106.5" y="450.7" font-size="2.6" fill="#333" text-anchor="middle">软件工程</text>
<rect x="141" y="445.5" width="24.5" height="8.5" fill="#aadfe0" stroke="#9aa4a8" stroke-width="0.5"/>
<text x="153.25" y="450.7" font-size="2.6" fill="#333" text-anchor="middle">Java程序设计</text>
<rect x="169.5" y="445.5" width="24.5" height="8.5" fill="#aadfe0" stroke="#9aa4a8" stroke-width="0.5"/>
<text x="181.75" y="450.7" font-size="2.6" fill="#333" text-anchor="middle">Java Web技术</text>
<rect x="77" y="465.4" width="129.5" height="12.4" fill="#fff" stroke="#9aa4a8" stroke-width="0.5"/>
<rect x="84.5" y="459" width="21.0" height="9.8" fill="#fff" stroke="#9aa4a8" stroke-width="0.5" stroke-dasharray="1.200 .8"/>
<text x="95.0" y="465" font-size="2.6" fill="#333" text-anchor="middle">程序员</text>
<rect x="108" y="459" width="21" height="9.8" fill="#fff" stroke="#9aa4a8" stroke-width="0.5" stroke-dasharray="1.200 .8"/>
<text x="118.5" y="465" font-size="2.6" fill="#333" text-anchor="middle">软件测试员</text>
<rect x="132.5" y="459" width="20.5" height="9.8" fill="#fff" stroke="#9aa4a8" stroke-width="0.5" stroke-dasharray="1.200 .8"/>
<text x="142.75" y="465" font-size="2.6" fill="#333" text-anchor="middle">数据库</text>
<rect x="158" y="459" width="21.5" height="9.8" fill="#fff" stroke="#9aa4a8" stroke-width="0.5" stroke-dasharray="1.200 .8"/>
<text x="168.75" y="465" font-size="2.6" fill="#333" text-anchor="middle">Java程序员</text>
<rect x="183" y="459" width="21" height="9.8" fill="#fff" stroke="#9aa4a8" stroke-width="0.5" stroke-dasharray="1.200 .8"/>
<text x="193.5" y="465" font-size="2.6" fill="#333" text-anchor="middle">系统维护员</text>
<rect x="123" y="471" width="24" height="5" fill="#aadfe0" stroke="none" stroke-width="0.5"/>
<text x="135" y="474.6" font-size="2.6" fill="#333" text-anchor="middle">Java项目实战</text>
<rect x="93" y="479.8" width="90.5" height="6.8" fill="#aadfe0" stroke="#9aa4a8" stroke-width="0.5"/>
<text x="138" y="484.2" font-size="2.6" fill="#333" text-anchor="middle">顶岗实习  毕业设计</text>
<path d="M88,428v2.5h-1l2,2l2,-2h-1v-2.5z" fill="#fff" stroke="#9aa4a8" stroke-width=".4"/>
<path d="M131.7,428v27.5h-1l2,2l2,-2h-1v-27.5z" fill="#fff" stroke="#9aa4a8" stroke-width=".4"/>
<path d="M153,428v2.5h-1l2,2l2,-2h-1v-2.5z" fill="#fff" stroke="#9aa4a8" stroke-width=".4"/>
<path d="M194.5,428v27.5h-1l2,2l2,-2h-1v-27.5z" fill="#fff" stroke="#9aa4a8" stroke-width=".4"/>
<path d="M96,454v3.5h-1l2,2l2,-2h-1v-3.5z" fill="#fff" stroke="#9aa4a8" stroke-width=".4"/>
<path d="M120,454v3.5h-1l2,2l2,-2h-1v-3.5z" fill="#fff" stroke="#9aa4a8" stroke-width=".4"/>
<path d="M162.5,454v3.5h-1l2,2l2,-2h-1v-3.5z" fill="#fff" stroke="#9aa4a8" stroke-width=".4"/>
<path d="M171.5,454v3.5h-1l2,2l2,-2h-1v-3.5z" fill="#fff" stroke="#9aa4a8" stroke-width=".4"/>
<polygon points="116,662.5 238.500,646.5 238.500,662.5" fill="#c9d7ea"/><polygon points="126,662.5 238.500,651.0 238.500,662.5" fill="#9fb7db"/>
<g transform="translate(66.500,548) scale(.68,1)" font-family="Noto Sans CJK SC, sans-serif" font-weight="500" font-size="17.500"><text x="1" y=".8" fill="#3a2412" opacity=".7">实践课程体系</text><text fill="url(#ttex)">实践课程体系</text></g>
<rect x="64.5" y="556.2" width="21.5" height="12.2" rx="1.500" fill="#f7941d" stroke="#d97800" stroke-width=".5"/>
<text x="65.5" y="559" font-size="2.1" fill="#222">项目/课程</text>
<text x="65.5" y="562" font-size="2.1" fill="#222">《C 语言程序设计》</text>
<rect x="114.8" y="556.2" width="21.2" height="12.2" rx="1.500" fill="#f7941d" stroke="#d97800" stroke-width=".5"/>
<text x="115.8" y="559" font-size="2.1" fill="#222">项目/课程</text>
<text x="115.8" y="562" font-size="2.1" fill="#222">《数据库基础》</text>
<rect x="90.2" y="585" width="26.4" height="11.6" rx="1.500" fill="#f7941d" stroke="#d97800" stroke-width=".5"/>
<text x="91.2" y="588" font-size="2.1" fill="#222">项目/课程</text>
<text x="91.2" y="591" font-size="2.1" fill="#222">《数字电路》</text>
<text x="91.2" y="594" font-size="2.1" fill="#222">《Visual 基础教程》</text>
<circle cx="100.400" cy="571.500" r="9.300" fill="#f7941d" stroke="#d97800" stroke-width=".5"/><path d="M100.400,571.500v-9.300M100.400,571.500l-7,6M100.400,571.500l7,6" stroke="#c96f00" stroke-width=".4"/>
<text x="94.5" y="569.5" font-size="2.1" fill="#222">程序</text>
<text x="94.5" y="572.3" font-size="2.1" fill="#222">设计</text>
<text x="101.5" y="569" font-size="2.1" fill="#222">数据库</text>
<text x="98" y="578.5" font-size="2.1" fill="#222">电子</text>
<rect x="140.5" y="556" width="21.1" height="12.4" rx="1.500" fill="#d2f6fb" stroke="#86d3e0" stroke-width=".5"/>
<text x="141.5" y="559" font-size="2.1" fill="#222">项目/课程</text>
<text x="141.5" y="562" font-size="2.1" fill="#222">《C net 项目实战》</text>
<rect x="180" y="556" width="25.6" height="12.4" rx="1.500" fill="#d2f6fb" stroke="#86d3e0" stroke-width=".5"/>
<text x="181" y="559" font-size="2.1" fill="#222">项目/课程</text>
<text x="181" y="562" font-size="2.1" fill="#222">《Asp .net》</text>
<rect x="159.7" y="589.4" width="20.8" height="11.2" rx="1.500" fill="#d2f6fb" stroke="#86d3e0" stroke-width=".5"/>
<text x="160.7" y="592.2" font-size="2.1" fill="#222">项目/课程</text>
<text x="160.7" y="595" font-size="2.1" fill="#222">《C#程序设计》</text>
<circle cx="171" cy="576" r="9.300" fill="#d2f6fb" stroke="#86d3e0" stroke-width=".5"/><path d="M171,576v-9.300M171,576l-7.500,5.500M171,576l7.500,5.500" stroke="#7bbac5" stroke-width=".4"/>
<text x="164" y="572" font-size="2.1" fill="#222">网站应</text>
<text x="164" y="574.8" font-size="2.1" fill="#222">用软件</text>
<text x="172.5" y="572" font-size="2.1" fill="#222">企业应</text>
<text x="172.5" y="574.8" font-size="2.1" fill="#222">用软件</text>
<text x="167" y="582" font-size="2.1" fill="#222">面向对象</text>
<ellipse cx="130.600" cy="589.400" rx="8.600" ry="6.300" fill="#ffd21a" stroke="#e8b800" stroke-width=".4"/>
<text x="125.5" y="590.3" font-size="2.4" fill="#222">职业技能</text>
<path d="M110,580l2,-2.500l7,5l1.500,-2l1.500,7l-7,-.5l1.500,-2z" fill="#8dc21f"/>
<path d="M152.500,580l-2,-2.500l-7,5l-1.500,-2l-1.500,7l7,-.5l-1.500,-2z" fill="#8dc21f"/>
<path d="M129,609v-8h-2l4,-5l4,5h-2v8z" fill="#8dc21f"/>
<path d="M121.500,576.500q8,-5 15,.5l3.500,-1l-6,3.500q-6,-4.500 -12.500,-3z" fill="#e0603a"/><path d="M152.500,591q-3,8 -13.500,10.500l-2.500,2.500l7.500,-1.500q8,-3.500 8.500,-11.500z" fill="#e0603a"/>
<rect x="101.5" y="602" width="23.1" height="12.6" rx="1.500" fill="#cdf5cd" stroke="#93d893" stroke-width=".5"/>
<text x="102.5" y="605" font-size="2.1" fill="#222">课程/项目</text>
<text x="102.5" y="608" font-size="2.1" fill="#222">《软件工程与UML》</text>
<rect x="141.4" y="602" width="21.6" height="12.6" rx="1.500" fill="#cdf5cd" stroke="#93d893" stroke-width=".5"/>
<text x="142.4" y="605" font-size="2.1" fill="#222">课程/项目</text>
<text x="142.4" y="608" font-size="2.1" fill="#222">《C net 项目实战》</text>
<rect x="120.3" y="636.7" width="23.4" height="11.1" rx="1.500" fill="#cdf5cd" stroke="#93d893" stroke-width=".5"/>
<text x="121.3" y="639.7" font-size="2.1" fill="#222">课程/项目</text>
<text x="121.3" y="642.7" font-size="2.1" fill="#222">毕业设计、顶岗实习</text>
<circle cx="133.800" cy="624" r="9.500" fill="#cdf5cd" stroke="#93d893" stroke-width=".5"/><path d="M133.800,624v-9.500M133.800,624l-6,6M133.800,624l6,6" stroke="#7cc27c" stroke-width=".4"/>
<text x="127" y="621.5" font-size="2.1" fill="#222">项目</text>
<text x="127" y="624.3" font-size="2.1" fill="#222">管理</text>
<text x="135.5" y="621.5" font-size="2.1" fill="#222">案例</text>
<text x="135.5" y="624.3" font-size="2.1" fill="#222">开发</text>
<text x="131" y="630.5" font-size="2.1" fill="#222">顶岗</text>
<line x1="86" y1="568.4" x2="91.5" y2="570" stroke="#2233cc" stroke-width=".8"/>
<line x1="114.8" y1="568.4" x2="109.5" y2="570" stroke="#2233cc" stroke-width=".8"/>
<line x1="100.4" y1="581" x2="100.4" y2="585" stroke="#2233cc" stroke-width=".8"/>
<line x1="161.6" y1="568.4" x2="164.5" y2="570" stroke="#2233cc" stroke-width=".8"/>
<line x1="180" y1="568.4" x2="177.5" y2="570" stroke="#2233cc" stroke-width=".8"/>
<line x1="171" y1="585.5" x2="171" y2="589.4" stroke="#2233cc" stroke-width=".8"/>
<line x1="124.6" y1="614.6" x2="127.5" y2="616.5" stroke="#2233cc" stroke-width=".8"/>
<line x1="141.4" y1="614.6" x2="140" y2="616.5" stroke="#2233cc" stroke-width=".8"/>
<line x1="133.8" y1="633.5" x2="133.8" y2="636.7" stroke="#2233cc" stroke-width=".8"/>
</svg>
<svg width="187" height="141" viewBox="0 0 648 486" style="left:52px;top:679px">
<defs>
<linearGradient id="twood" x1="0" y1="0" x2="0" y2="1"><stop offset="0" stop-color="#6b4423"/><stop offset=".25" stop-color="#b98a58"/><stop offset=".45" stop-color="#7a4f2a"/><stop offset=".65" stop-color="#c39a6b"/><stop offset=".85" stop-color="#6a4120"/><stop offset="1" stop-color="#a77b4c"/></linearGradient>
<pattern id="ttex" width="26" height="22" patternUnits="userSpaceOnUse"><rect width="26" height="22" fill="#6a4827"/><ellipse cx="11.8" cy="12.3" rx="3.0" ry="1.0" fill="#8d6239" transform="rotate(15 11.8 12.3)"/><ellipse cx="4.8" cy="11.3" rx="2.4" ry="1.3" fill="#4a2f16" transform="rotate(100 4.8 11.3)"/><ellipse cx="7.9" cy="2.0" rx="2.8" ry="1.2" fill="#3a2410" transform="rotate(80 7.9 2.0)"/><ellipse cx="25.1" cy="14.4" rx="2.4" ry="0.7" fill="#3a2410" transform="rotate(-10 25.1 14.4)"/><ellipse cx="1.5" cy="4.2" rx="1.5" ry="0.6" fill="#e0c8a0" transform="rotate(60 1.5 4.2)"/><ellipse cx="11.5" cy="18.5" rx="2.1" ry="1.2" fill="#e0c8a0" transform="rotate(-25 11.5 18.5)"/><ellipse cx="17.2" cy="10.1" rx="1.6" ry="1.5" fill="#4a2f16" transform="rotate(30 17.2 10.1)"/><ellipse cx="8.2" cy="5.1" rx="1.6" ry="0.7" fill="#4a2f16" transform="rotate(80 8.2 5.1)"/><ellipse cx="2.8" cy="6.4" rx="1.1" ry="0.6" fill="#3a2410" transform="rotate(15 2.8 6.4)"/><ellipse cx="5.5" cy="20.0" rx="2.0" ry="1.5" fill="#b08352" transform="rotate(80 5.5 20.0)"/><ellipse cx="1.9" cy="13.8" rx="2.7" ry="0.8" fill="#4a2f16" transform="rotate(30 1.9 13.8)"/><ellipse cx="8.6" cy="21.2" rx="2.7" ry="0.7" fill="#d8ba90" transform="rotate(-10 8.6 21.2)"/><ellipse cx="0.3" cy="10.2" rx="2.1" ry="1.2" fill="#d8ba90" transform="rotate(100 0.3 10.2)"/><ellipse cx="13.2" cy="21.7" rx="2.7" ry="1.0" fill="#b08352" transform="rotate(-10 13.2 21.7)"/><ellipse cx="10.3" cy="21.8" rx="1.0" ry="1.4" fill="#432a13" transform="rotate(30 10.3 21.8)"/><ellipse cx="25.9" cy="0.4" rx="1.4" ry="1.5" fill="#432a13" transform="rotate(-10 25.9 0.4)"/><ellipse cx="1.1" cy="3.2" rx="2.0" ry="0.6" fill="#432a13" transform="rotate(60 1.1 3.2)"/><ellipse cx="21.6" cy="8.5" rx="1.2" ry="0.8" fill="#d8ba90" transform="rotate(-25 21.6 8.5)"/><ellipse cx="15.6" cy="8.2" rx="2.0" ry="1.5" fill="#e0c8a0" transform="rotate(0 15.6 8.2)"/><ellipse cx="22.5" cy="4.0" rx="1.3" ry="1.4" fill="#432a13" transform="rotate(15 22.5 4.0)"/><ellipse cx="18.9" cy="3.5" rx="2.4" ry="1.1" fill="#b08352" transform="rotate(100 18.9 3.5)"/><ellipse cx="15.7" cy="9.3" rx="1.2" ry="0.6" fill="#5b3a1c" transform="rotate(15 15.7 9.3)"/><ellipse cx="19.2" cy="8.6" rx="1.9" ry="1.4" fill="#e0c8a0" transform="rotate(30 19.2 8.6)"/><ellipse cx="13.5" cy="20.4" rx="3.1" ry="0.7" fill="#e0c8a0" transform="rotate(-10 13.5 20.4)"/><ellipse cx="7.3" cy="20.2" rx="1.4" ry="0.6" fill="#5b3a1c" transform="rotate(80 7.3 20.2)"/><ellipse cx="11.6" cy="1.3" rx="1.4" ry="0.9" fill="#432a13" transform="rotate(0 11.6 1.3)"/><ellipse cx="2.4" cy="3.0" rx="2.0" ry="0.9" fill="#8d6239" transform="rotate(0 2.4 3.0)"/><ellipse cx="15.3" cy="20.3" rx="2.0" ry="0.9" fill="#5b3a1c" transform="rotate(-25 15.3 20.3)"/><ellipse cx="0.6" cy="14.0" rx="2.1" ry="1.3" fill="#2e1c0c" transform="rotate(0 0.6 14.0)"/><ellipse cx="26.0" cy="1.7" rx="2.2" ry="1.3" fill="#c9a67a" transform="rotate(60 26.0 1.7)"/><ellipse cx="9.1" cy="15.1" rx="3.0" ry="1.4" fill="#b08352" transform="rotate(-25 9.1 15.1)"/><ellipse cx="22.5" cy="12.6" rx="2.4" ry="0.9" fill="#432a13" transform="rotate(-25 22.5 12.6)"/><ellipse cx="15.8" cy="1.8" rx="2.4" ry="1.5" fill="#b08352" transform="rotate(60 15.8 1.8)"/><ellipse cx="10.1" cy="16.2" rx="2.3" ry="1.0" fill="#8d6239" transform="rotate(-10 10.1 16.2)"/><ellipse cx="13.5" cy="11.3" rx="1.7" ry="0.7" fill="#3a2410" transform="rotate(15 13.5 11.3)"/><ellipse cx="24.9" cy="2.5" rx="2.7" ry="1.2" fill="#e0c8a0" transform="rotate(30 24.9 2.5)"/><ellipse cx="23.3" cy="8.1" rx="1.3" ry="1.2" fill="#8d6239" transform="rotate(0 23.3 8.1)"/><ellipse cx="19.6" cy="7.5" rx="3.0" ry="1.0" fill="#d8ba90" transform="rotate(60 19.6 7.5)"/><ellipse cx="10.5" cy="5.5" rx="2.4" ry="1.3" fill="#d8ba90" transform="rotate(15 10.5 5.5)"/><ellipse cx="10.0" cy="12.8" rx="1.7" ry="0.7" fill="#e0c8a0" transform="rotate(60 10.0 12.8)"/><ellipse cx="21.8" cy="18.7" rx="2.6" ry="1.5" fill="#5b3a1c" transform="rotate(0 21.8 18.7)"/><ellipse cx="2.9" cy="10.4" rx="3.0" ry="1.3" fill="#b08352" transform="rotate(100 2.9 10.4)"/><ellipse cx="17.5" cy="15.8" rx="2.9" ry="1.2" fill="#2e1c0c" transform="rotate(-10 17.5 15.8)"/><ellipse cx="21.5" cy="6.1" rx="2.3" ry="1.2" fill="#5b3a1c" transform="rotate(60 21.5 6.1)"/><ellipse cx="8.0" cy="17.4" rx="1.0" ry="0.7" fill="#e0c8a0" transform="rotate(15 8.0 17.4)"/><ellipse cx="0.6" cy="18.3" rx="1.5" ry="0.7" fill="#3a2410" transform="rotate(-10 0.6 18.3)"/><ellipse cx="11.6" cy="13.9" rx="2.4" ry="1.3" fill="#4a2f16" transform="rotate(15 11.6 13.9)"/><ellipse cx="5.2" cy="10.5" rx="1.4" ry="0.6" fill="#e0c8a0" transform="rotate(-25 5.2 10.5)"/><ellipse cx="4.7" cy="6.0" rx="1.8" ry="1.2" fill="#8d6239" transform="rotate(0 4.7 6.0)"/><ellipse cx="10.2" cy="17.4" rx="3.0" ry="0.7" fill="#b08352" transform="rotate(0 10.2 17.4)"/><ellipse cx="11.7" cy="4.3" rx="3.0" ry="0.6" fill="#8d6239" transform="rotate(60 11.7 4.3)"/><ellipse cx="12.1" cy="14.3" rx="1.5" ry="1.2" fill="#4a2f16" transform="rotate(15 12.1 14.3)"/><ellipse cx="6.3" cy="8.6" rx="1.2" ry="0.9" fill="#2e1c0c" transform="rotate(30 6.3 8.6)"/><ellipse cx="23.7" cy="18.8" rx="1.8" ry="0.7" fill="#e0c8a0" transform="rotate(60 23.7 18.8)"/><ellipse cx="14.3" cy="16.9" rx="2.1" ry="0.6" fill="#4a2f16" transform="rotate(80 14.3 16.9)"/><ellipse cx="20.8" cy="3.8" rx="1.7" ry="1.3" fill="#c9a67a" transform="rotate(100 20.8 3.8)"/><ellipse cx="3.9" cy="11.4" rx="2.6" ry="1.4" fill="#e0c8a0" transform="rotate(100 3.9 11.4)"/><ellipse cx="15.1" cy="15.2" rx="2.7" ry="1.0" fill="#8d6239" transform="rotate(30 15.1 15.2)"/><ellipse cx="21.6" cy="12.4" rx="1.4" ry="1.1" fill="#8d6239" transform="rotate(30 21.6 12.4)"/><ellipse cx="8.1" cy="8.4" rx="2.9" ry="1.4" fill="#d8ba90" transform="rotate(30 8.1 8.4)"/></pattern>
<linearGradient id="tga" x1="0" y1="0" x2="1" y2="0"><stop offset="0" stop-color="#b8ffb0" stop-opacity=".55"/><stop offset=".3" stop-color="#6dfc60"/><stop offset=".6" stop-color="#1df61d"/><stop offset="1" stop-color="#04ee04"/></linearGradient>
<linearGradient id="tgh" x1="0" y1="0" x2="0" y2="1"><stop offset="0" stop-color="#4cfb4c"/><stop offset=".45" stop-color="#1ef41e"/><stop offset="1" stop-color="#00f000"/></linearGradient>
<linearGradient id="tba" x1="0" y1="0" x2="1" y2="0"><stop offset="0" stop-color="#c4e8ff"/><stop offset=".45" stop-color="#86d2ff"/><stop offset="1" stop-color="#58beff"/></linearGradient>
<linearGradient id="tbh" x1="0" y1="0" x2="1" y2="0.400"><stop offset="0" stop-color="#7fd0ff"/><stop offset=".5" stop-color="#66c6ff"/><stop offset=".52" stop-color="#55baf8"/><stop offset="1" stop-color="#4db5f5"/></linearGradient>
<linearGradient id="tpa" x1="1" y1="0" x2="0" y2="0"><stop offset="0" stop-color="#a38cff"/><stop offset=".3" stop-color="#7a52ff"/><stop offset=".6" stop-color="#6633ff"/><stop offset="1" stop-color="#6030f8"/></linearGradient><linearGradient id="tph" x1="0" y1="1" x2="1" y2="0"><stop offset="0" stop-color="#7c55ff"/><stop offset=".5" stop-color="#6a3cff"/><stop offset="1" stop-color="#5d2cf4"/></linearGradient>
<linearGradient id="tsp" x1="0" y1="0" x2="0" y2="1"><stop offset="0" stop-color="#b03a4a"/><stop offset=".2" stop-color="#d9704a"/><stop offset=".5" stop-color="#f3ae3f"/><stop offset=".75" stop-color="#e27a35"/><stop offset="1" stop-color="#b82a2e"/></linearGradient>
<linearGradient id="tdeco" x1="0" y1="0" x2="1" y2="0"><stop offset="0" stop-color="#c9d7ea"/><stop offset="1" stop-color="#b3c6e3"/></linearGradient>
</defs>
<rect width="648" height="486" fill="#fff"/>
<polygon points="217,486 648,430 648,486" fill="#c9d7ea"/>
<polygon points="249,486 648,446 648,486" fill="#9fb7db"/>
<polygon points="449,486 648,464 648,486" fill="#93add6" opacity=".7"/>
<line x1="91" y1="430" x2="514" y2="430" stroke="#dde0e4" stroke-width="1.200"/>
<g transform="translate(48.5,84.5) scale(0.705,1)" font-family="Noto Sans CJK SC, sans-serif" font-weight="500" font-size="59"><text x="3" y="2.200" fill="#2e1c0e" opacity=".8">实践课程体系</text><text x="1.500" y="1.100" fill="#4a2e16">实践课程体系</text><text x="0" y="0" fill="url(#ttex)">实践课程体系</text></g>
<rect x="98.5" y="111.5" width="99.5" height="49.0" rx="4" fill="#fff" stroke="#2bee2b" stroke-width="2"/>
<rect x="306" y="123.5" width="88" height="51.5" rx="4" fill="#fff" stroke="#2bee2b" stroke-width="2"/>
<rect x="138.5" y="215" width="96.0" height="38" rx="4" fill="#fff" stroke="#2bee2b" stroke-width="2"/>
<rect x="353.5" y="186" width="94.0" height="44" rx="4" fill="#fff" stroke="#6a3fd0" stroke-width="1.6"/>
<rect x="117.5" y="298" width="98.0" height="47.5" rx="4" fill="#fff" stroke="#27cfee" stroke-width="1.8"/>
<rect x="240" y="315.5" width="98" height="48.0" rx="4" fill="#fff" stroke="#27cfee" stroke-width="1.8"/>
<rect x="99.5" y="380.5" width="97.0" height="48.0" rx="4" fill="#fff" stroke="#27cfee" stroke-width="1.8"/>
<rect x="352.5" y="334" width="82.0" height="44" rx="4" fill="#fff" stroke="#6a3fd0" stroke-width="1.6"/>
<rect x="437.5" y="340" width="73.0" height="39" rx="4" fill="#fff" stroke="#6a3fd0" stroke-width="1.6"/>
<path d="M249,162.6C264,158.5 284,157.5 299,164C312,172 316,189 315.8,206.5L292.3,206.5C292.3,186 287,172 271,165C264,163 257,163 249,163.2Z" fill="url(#tga)"/>
<path d="M275.2,206.2L327,206.2L304,234.5Q301.9,236.5 299.8,234.5Z" fill="url(#tgh)"/>
<path d="M237,349C229,336 218,319 219.5,306C221,292 232,282 246.8,276.2L259.3,296.2C246,303 238.5,312 237,322C236,332 237.5,341 239,349Z" fill="url(#tba)"/>
<polygon points="241.4,265.8 281.1,274.2 267,309.9" fill="url(#tbh)" stroke="#62c3fd" stroke-width=".8" stroke-linejoin="round"/>
<path d="M414,277.5C405,291 395,299 383,299C371,299 362,291 353.8,281L337.3,300.5C349,311 360,317 373,316.5C391,315 405,299 414,278.5Z" fill="url(#tpa)"/>
<polygon points="322.1,274.3 364.1,269.3 331.2,309.7" fill="url(#tph)" stroke="#6535fb" stroke-width="1" stroke-linejoin="round"/>
<circle cx="301.3" cy="260.3" r="22.800" fill="url(#tsp)"/>
<circle cx="204.2" cy="159.2" r="41.7" fill="#00ec00" stroke="#156b15" stroke-width=".9"/><line x1="204.2" y1="159.2" x2="192.8" y2="118.3" stroke="#156b15" stroke-width=".9"/><line x1="204.2" y1="159.2" x2="244.3" y2="169.5" stroke="#156b15" stroke-width=".9"/><line x1="204.2" y1="159.2" x2="175" y2="188.3" stroke="#156b15" stroke-width=".9"/>
<circle cx="457" cy="277.6" r="42.2" fill="#6633ff" stroke="#2a1680" stroke-width=".9"/><line x1="457" y1="277.6" x2="478.5" y2="241.5" stroke="#2a1680" stroke-width=".9"/><line x1="457" y1="277.6" x2="415" y2="277.6" stroke="#2a1680" stroke-width=".9"/><line x1="457" y1="277.6" x2="479.5" y2="313.5" stroke="#2a1680" stroke-width=".9"/>
<circle cx="209.7" cy="382.2" r="42" fill="#66ccff" stroke="#2d4f78" stroke-width=".9"/><line x1="209.7" y1="382.2" x2="238" y2="351.5" stroke="#2d4f78" stroke-width=".9"/><line x1="209.7" y1="382.2" x2="168.8" y2="371.5" stroke="#2d4f78" stroke-width=".9"/><line x1="209.7" y1="382.2" x2="220" y2="423" stroke="#2d4f78" stroke-width=".9"/>
<g font-family="Liberation Sans, Noto Sans CJK SC, sans-serif" font-weight="500"><text x="93.5" y="129.5" font-size="8" fill="#222">《软件工程与UML》</text><text x="203.5" y="148" font-size="8" fill="#0c3d0c">案例开发</text><text x="163.5" y="158.5" font-size="8" fill="#0c3d0c">项目管理</text><text x="193.5" y="180.5" font-size="8" fill="#0c3d0c">顶岗实习</text><text x="315" y="144" font-size="8" fill="#222">课程/项目</text><text x="312.0" y="158.5" font-size="8" fill="#222">《Java项目实战》</text><text x="357.5" y="198.5" font-size="8" fill="#222">项目/课程</text><text x="355.0" y="212.5" font-size="8" fill="#222">《Java项目实战》</text><text x="142" y="227" font-size="8" fill="#222">课程/项目</text><text x="142" y="241.5" font-size="8" fill="#222">毕业设计、顶岗实习</text><text x="289.5" y="214" font-size="8" fill="#0c3d0c">综合技</text><text x="289.5" y="222.5" font-size="8" fill="#0c3d0c">能</text><text x="301.3" y="258" font-size="8" fill="#3a1a10" text-anchor="middle">职业</text><text x="301.3" y="267.5" font-size="8" fill="#3a1a10" text-anchor="middle">技能</text><text x="246.5" y="278" font-size="8" fill="#173a55">基本技</text><text x="246.5" y="287" font-size="8" fill="#173a55">能</text><text x="326" y="278" font-size="8" fill="#1d0c5c">专项技</text><text x="326" y="287" font-size="8" fill="#1d0c5c">能</text><text x="429.5" y="256.5" font-size="8" fill="#eee8ff">网站应</text><text x="429.5" y="265.7" font-size="8" fill="#eee8ff">用软件</text><text x="429.5" y="274.9" font-size="8" fill="#eee8ff">开发</text><text x="465.5" y="271.0" font-size="8" fill="#eee8ff">企业应</text><text x="465.5" y="280.2" font-size="8" fill="#eee8ff">用软件</text><text x="465.5" y="289.4" font-size="8" fill="#eee8ff">开发</text><text x="426" y="292.0" font-size="8" fill="#eee8ff">面向对</text><text x="426" y="301.5" font-size="8" fill="#eee8ff">象程序</text><text x="426" y="311.0" font-size="8" fill="#eee8ff">设计</text><text x="121" y="313.5" font-size="8" fill="#222">项目/课程</text><text x="118.0" y="327.5" font-size="8" fill="#222">《Java程序设计基础》</text><text x="118.0" y="341" font-size="8" fill="#222">《数据库技术》</text><text x="249.5" y="324" font-size="8" fill="#222">项目/课程</text><text x="247.0" y="338" font-size="8" fill="#222">《计算机导论》</text><text x="181.5" y="360.5" font-size="8" fill="#123">程序设计</text><text x="217.5" y="382.5" font-size="8" fill="#123">计算机</text><text x="217.5" y="396" font-size="8" fill="#123">基础</text><text x="170.5" y="396.5" font-size="8" fill="#123">网页制作</text><text x="106.5" y="392" font-size="8" fill="#222">项目/课程</text><text x="104.0" y="406.5" font-size="8" fill="#222">《前端设计基础》</text><text x="356.5" y="346" font-size="8" fill="#222">项目/课程</text><text x="349.0" y="355.5" font-size="8" fill="#222">《Java 程序设计高级 》</text><text x="437" y="338.5" font-size="8" fill="#222">项目/课程</text><text x="435.0" y="352.5" font-size="8" fill="#222">《Java web技术》</text></g>
</svg>
<svg width="20" height="20" viewBox="0 0 20 20" style="left:128px;top:829px"><path d="M3.500,10h13M10,3.500v13" stroke="#3b3f4a" stroke-width="1.300"/></svg>
<svg width="1582" height="891" viewBox="0 0 1582 891" style="left:0;top:0" font-family="Liberation Sans, Noto Sans CJK SC, sans-serif">
<text x="264" y="706.8" font-size="11" fill="#555a60" textLength="259" lengthAdjust="spacing">软件技术专业的实践教学体系主要分为三个阶段进行：</text>
<text x="264" y="720" font-size="11" fill="#555a60" textLength="1069" lengthAdjust="spacing">第一阶段是通过学院 <tspan font-family="Noto Sans CJK SC, sans-serif">“</tspan>软件技术实训室<tspan font-family="Noto Sans CJK SC, sans-serif">”</tspan>的一体化项目教学，完成基本技能的单元项目，分组体验模拟项目，培养学生的职业道德、竞争意识、团队合作与协同能力；培养学生的创新意识、创造能力和外语应用能力；培养</text>
<text x="264" y="733.2" font-size="11" fill="#555a60" textLength="193" lengthAdjust="spacing">学生的计算机应用能力、软件编程能力。</text>
<text x="264" y="746.4" font-size="11" fill="#555a60" textLength="690" lengthAdjust="spacing">第二阶段是通过在校企共建的<tspan font-family="Noto Sans CJK SC, sans-serif">“</tspan>软件实习基地<tspan font-family="Noto Sans CJK SC, sans-serif">”</tspan>中以真实软件开发项目为载体的项目实战，培养学生的综合应用能力、规范化的软件开发能力。</text>
<text x="277" y="759.6" font-size="11" fill="#555a60" textLength="635" lengthAdjust="spacing">第三阶段是通过在顶岗实习企业中的项目开发，培养学生的职业素养与职业能力、完成工作任务的能力、胜任软件企业岗位的能力。</text>
<path d="M1338.500,182.500h5.500l-2.750,-3.500z" fill="#8d8f98"/>
<rect x="1336.500" y="441" width="9.500" height="32" rx="4" fill="#d9dae0"/>
<path d="M1338.800,638.800h5.400l-2.700,3.200z" fill="#8d8f98"/>
<path d="M1338.800,653.500h5.400l-2.700,-3zM1338.800,657.500h5.400l-2.700,-3z" fill="#8d8f98"/>
<path d="M1338.800,666.500h5.400l-2.700,3zM1338.800,670.500h5.400l-2.700,3z" fill="#8d8f98"/>
<path d="M1358,179.500h16M1358,182.500h16" stroke="#dfe0e4" stroke-width="1"/>
<g stroke="#4a4d55" stroke-width="1.100" fill="none" stroke-linejoin="round" stroke-linecap="round"><path d="M1363.500,207q.5,-5 5.500,-7.200q2.500,-.8 3.300,-.3q.5,.8 -.3,3.300q-2.200,5 -7.200,5.500z"/><circle cx="1368.500" cy="203.300" r="1.200"/><path d="M1363.500,203.500l-2.500,.8l-1.200,2.200l2.500,-.5M1368.500,208.500l-.8,2.500l-2.200,1.200l.5,-2.500M1360.500,208.500l-1.500,1.500M1362.500,210.500l-2,2M1360,211.500l-.8,.8"/></g>
<g stroke="#4a4d55" stroke-width="1.100" fill="none" stroke-linejoin="round" stroke-linecap="round"><circle cx="1361.500" cy="231.500" r="1.600"/><path d="M1363.500,231.500h9"/><circle cx="1369.500" cy="238.800" r="1.600"/><path d="M1359.500,238.800h8M1371.500,238.800h1.500"/></g>
<g stroke="#4a4d55" stroke-width="1.100" fill="none" stroke-linejoin="round" stroke-linecap="round"><path d="M1367.500,258.500l1.700,3.600l3.900,.5l-2.900,2.700l.8,3.900l-3.500,-1.900l-3.500,1.900l.8,-3.900l-2.900,-2.700l3.900,-.5z"/><path d="M1362,268l-2.500,2.500M1364.500,269.500l-1.500,1.500M1360.500,266l-1,1"/></g>
<g stroke="#4a4d55" stroke-width="1.100" fill="none" stroke-linejoin="round" stroke-linecap="round"><path d="M1361.500,297.500h-2v-9h11v2"/><rect x="1362.500" y="291.500" width="10" height="8" /><path d="M1365,296.500h3M1366.800,295l1.500,1.500l-1.500,1.500"/></g>
<g stroke="#4a4d55" stroke-width="1.100" fill="none" stroke-linejoin="round" stroke-linecap="round"><circle cx="1366" cy="324.500" r="6"/><path d="M1364,322.800q0,-2 2,-2t2,1.800q0,1.200 -1.200,1.800q-.8,.5 -.8,1.600M1366,327.800v.3"/></g>
<g stroke="#4a4d55" stroke-width="1.100" fill="none" stroke-linejoin="round" stroke-linecap="round"><path d="M1371.500,353v-3q0,-1.500 -1.500,-1.500h-8q-1.500,0 -1.500,1.500v7q0,1.500 1.500,1.500h3"/><path d="M1362.500,353.500q.8,-2.500 1.600,0M1365.500,351l.8,1.500"/><circle cx="1369" cy="357" r="3.200"/><path d="M1367.800,357.500l1,1l1.500,-2"/></g>
<g stroke="#4a4d55" stroke-width="1.100" fill="none" stroke-linejoin="round" stroke-linecap="round"><path d="M1363.500,389.500h5M1364.500,391h3"/><path d="M1363.500,388q-3,-2 -3,-5.300q0,-5 5.500,-5t5.500,5q0,3.300 -3,5.300z"/><path d="M1366.800,380l-2,3.300h2.600l-2,3.300"/></g>
<circle cx="1361.500" cy="838.500" r="1.500" fill="none" stroke="#555" stroke-width=".9"/><circle cx="1366" cy="838.500" r="1.500" fill="none" stroke="#555" stroke-width=".9"/><circle cx="1370.500" cy="838.500" r="1.500" fill="none" stroke="#555" stroke-width=".9"/>
<text x="31" y="872.8" font-size="10.5" fill="#3b3b3b" textLength="66.5" lengthAdjust="spacing">幻灯片 25 / 40</text>
<text x="116" y="872.8" font-size="10.5" fill="#3b3b3b" textLength="61.5" lengthAdjust="spacing">4_Office 主题</text>
<path d="M106.500,862v14M185.500,862v14M273.500,862v14M910.500,862v14M1019.500,862v14M1098.500,862v14M1151.500,862v14" stroke="#e4e5e8" stroke-width="1"/>
<path d="M202.500,866v-1.500h8v1.500M206.500,864.500v9.500M205,874h3" stroke="#444" stroke-width="1" fill="none"/>
<text x="209.5" y="874.5" font-size="8" fill="#444">?</text>
<text x="217" y="872.8" font-size="10.5" fill="#3b3b3b" textLength="40" lengthAdjust="spacing">缺失字体</text>
<g stroke="#7a7c82" stroke-width="1.050" fill="none" stroke-linejoin="round"><path d="M838,862.500l5.500,2.500v6.500l-5.500,3l-5.500,-3v-6.500zM832.500,865l5.500,2.500l5.500,-2.500M838,867.500v7"/></g>
<text x="848" y="872.6" font-size="10.3" fill="#7a7c82" textLength="40" lengthAdjust="spacing">智能美化</text>
<path d="M895.3,869.9h4.4l-2.2,-2.64z" fill="#555"/>
<g stroke="#444" stroke-width="1.100" fill="none" stroke-linejoin="round"><path d="M921,865h8M921,869h13.500M921,873h13.500M930,862.500l2,2.500l2.500,-2.500"/></g>
<text x="936" y="872.8" font-size="10.5" fill="#3b3b3b" textLength="20" lengthAdjust="spacing">备注</text>
<path d="M960.3,867.6999999999999h4.4l-2.2,2.64z" fill="#555"/>
<g stroke="#444" stroke-width="1.100" fill="none" stroke-linejoin="round"><path d="M979.500,863.500h-8v9.500h2.500v2.500l3,-2.500h6.500v-5"/><path d="M981,864.500h5M983.500,862v5"/></g>
<text x="988.5" y="872.8" font-size="10.5" fill="#3b3b3b" textLength="20" lengthAdjust="spacing">批注</text>
<rect x="1027" y="859" width="19.500" height="20" rx="2" fill="#dcdee3"/>
<g stroke="#444" stroke-width="1.100" fill="none" stroke-linejoin="round"><rect x="1031.500" y="863.500" width="11.500" height="11"/><path d="M1035,863.500v11M1035,867h8"/></g>
<g stroke="#444" stroke-width="1.100" fill="none" stroke-linejoin="round"><rect x="1053" y="863.500" width="4.500" height="4.500"/><rect x="1060.500" y="863.500" width="4.500" height="4.500"/><rect x="1053" y="870.500" width="4.500" height="4.500"/><rect x="1060.500" y="870.500" width="4.500" height="4.500"/></g>
<g stroke="#444" stroke-width="1.100" fill="none" stroke-linejoin="round"><path d="M1079.800,865.500q-3,-2.500 -6.300,-1v9.500q3.300,-1.500 6.300,1q3,-2.500 6.300,-1v-9.500q-3.300,-1.500 -6.300,1zM1079.800,865.500v9.500"/></g>
<rect x="1107" y="859" width="26" height="20" rx="2.500" fill="#6c7183"/><path d="M1116,863.500v11l8.500,-5.500z" fill="#fff"/>
<path d="M1137.3,867.6999999999999h4.4l-2.2,2.64z" fill="#555"/>
<g stroke="#444" stroke-width="1.100" fill="none" stroke-linejoin="round"><path d="M1162.500,866v-3h3M1171.500,863h3v3M1174.500,871.500v3h-3M1165.500,874.500h-3v-3"/><rect x="1165.500" y="866" width="6" height="5.500"/></g>
<text x="1182" y="872.6" font-size="10.5" fill="#3b3b3b" textLength="21" lengthAdjust="spacing">81%</text>
<path d="M1206.3,867.6999999999999h4.4l-2.2,2.64z" fill="#555"/>
<path d="M1221,869h8" stroke="#333" stroke-width="1.600"/><path d="M1238,869h130" stroke="#666" stroke-width="1"/><circle cx="1284" cy="869" r="4" fill="#fff" stroke="#777"/><path d="M1364,869h7M1367.500,865.500v7" stroke="#333" stroke-width="1.400"/>
</svg>
<svg width="1582" height="891" viewBox="0 0 1582 891" style="left:0;top:0" font-family="Liberation Sans, Noto Sans CJK SC, sans-serif">
<defs>
<filter id="cb" x="-5%" y="-5%" width="110%" height="110%"><feGaussianBlur stdDeviation="1.1"/></filter>
<filter id="cb2" x="-5%" y="-5%" width="110%" height="110%"><feGaussianBlur stdDeviation="0.6"/></filter>
<clipPath id="camclip"><rect x="1385.500" y="44" width="197" height="108"/></clipPath>
<linearGradient id="wall" x1="0" y1="0" x2="1" y2="1"><stop offset="0" stop-color="#d6d7c1"/><stop offset="1" stop-color="#bfc0a6"/></linearGradient>
<linearGradient id="face" x1="0" y1="0" x2="1" y2="0"><stop offset="0" stop-color="#b58f7d"/><stop offset=".35" stop-color="#d4b09f"/><stop offset=".7" stop-color="#cfa896"/><stop offset="1" stop-color="#a57f6d"/></linearGradient>
<filter id="ts" x="-20%" y="-20%" width="140%" height="160%"><feDropShadow dx="0.600" dy="0.800" stdDeviation="0.700" flood-color="#000" flood-opacity=".85"/></filter>
</defs>
<path d="M93,52q2,-3.500 9.500,-3.500t9.500,3.500z" fill="#2fb53a"/>
<g clip-path="url(#camclip)"><g filter="url(#cb)">
<rect x="1383" y="42" width="202" height="112" fill="#050505"/>
<rect x="1411.500" y="42" width="149" height="112" fill="url(#wall)"/>
<rect x="1411.500" y="42" width="35" height="112" fill="#c9ccb5"/>
<path d="M1411,48l15,1l1,4l-16,2z" fill="#8f9088"/>
<rect x="1445.500" y="42" width="39.500" height="100" fill="#e9e7dc"/>
<rect x="1449.5" y="42" width="1.6" height="100" fill="#77766a"/>
<rect x="1454.5" y="42" width="1.4" height="100" fill="#8a897c"/>
<rect x="1459" y="42" width="1.8" height="100" fill="#6e6d62"/>
<rect x="1464.5" y="42" width="1.4" height="100" fill="#8a897c"/>
<rect x="1469" y="42" width="1.6" height="100" fill="#77766a"/>
<rect x="1474" y="42" width="1.4" height="100" fill="#8f8e80"/>
<rect x="1478.5" y="42" width="1.6" height="100" fill="#77766a"/>
<rect x="1483.5" y="42" width="1.2" height="100" fill="#9a998c"/>
<rect x="1485" y="42" width="76" height="112" fill="#d1d3bc"/>
<rect x="1535" y="42" width="22" height="112" fill="#c2c3aa" opacity=".6"/>
<path d="M1561,42q-5,18 -4,40q1,30 4,72h25v-112z" fill="#070707"/>
<path d="M1411,106l13,-1.500v50h-13z" fill="#2f3033"/><path d="M1412.500,109l4.500,-.7v15l-4.500,.7zM1418.500,108l4.500,-.7v15l-4.500,.7z" fill="#596070"/>
<path d="M1411,126l22,-4v32h-22z" fill="#35332f"/><path d="M1412,131l20,-4v8l-20,4zM1412,143l20,-3v12h-20z" fill="#c9c5b3"/>
<path d="M1431,152v-10q8,-6 20,-6h24v16z" fill="#8f97da"/>
<path d="M1526,140h32v12h-32z" fill="#b5b9e0"/><ellipse cx="1546" cy="147" rx="7" ry="4.200" fill="#e59430"/>
<path d="M1436,154q4,-12 22,-16q14,-4 22,-6h32q8,4 18,7q10,4 12,15z" fill="#3d4048"/>
<path d="M1446,154l10,-14M1456,154l8,-16M1440,148l24,-6M1520,138l14,16M1512,140l8,14" stroke="#8d8f98" stroke-width="1.200" opacity=".7"/>
<path d="M1480,130h32v14q-16,9 -32,0z" fill="#a07a68"/>
<path d="M1470.800,104q-.5,-10 4,-12h42q4.500,2 4.200,12q.3,12 -2.500,21q-3.500,13 -11,18.500q-6,3.500 -12,3.500t-11.500,-3.500q-7.500,-5.500 -11,-18.500q-2.500,-9 -2.200,-21z" fill="url(#face)"/>
<ellipse cx="1497" cy="122" rx="9" ry="12" fill="#e0c4b6" opacity=".55"/>
<ellipse cx="1469.800" cy="114" rx="2.300" ry="6" fill="#a8826f"/><ellipse cx="1521.300" cy="113" rx="2.800" ry="7" fill="#b8917e"/>
<path d="M1466,108q-4,-27 14,-28.500q15,-3 28,0q16,2.500 12,28q-1.500,-4 -2.500,-6.500q-2.500,-4.500 -21.500,-4.500q-20,0 -24,4.500q-3,3 -6,7z" fill="#26221f"/>
<path d="M1476.500,112.500q5,-2 10,-.3M1498.500,111.500q6,-1.800 11.500,.5" stroke="#40312b" stroke-width="1.900" fill="none"/>
<path d="M1477.500,115.800q4,-1.200 8,0M1499.500,115q4.500,-1.200 9,.2" stroke="#3c2d28" stroke-width="1.500" fill="none"/>
<path d="M1490,117q-1.500,8 -2.500,12q4,2.500 9,0" stroke="#9c7565" stroke-width="1.500" fill="none"/>
<path d="M1486,138.500q6,-2 13,.3" stroke="#70423e" stroke-width="2" fill="none"/>
<path d="M1473,108q-1,14 4,24" stroke="#8e6a5a" stroke-width="3" fill="none" opacity=".6"/>
<path d="M1474.500,137q5,13 22,12.500q11,-.5 20,-6.500l4.500,-19" stroke="#f2f0ec" stroke-width="1.100" fill="none"/>
</g></g>
<rect x="1385.500" y="151.500" width="197" height="1.500" fill="#1450d8" opacity=".8"/>
<rect x="1375.500" y="60" width="78.500" height="43" rx="21.500" fill="#2a3034" opacity=".94"/>
<text x="1386.500" y="87.300" font-size="15.200" fill="#fff" font-weight="500" textLength="30.500" lengthAdjust="spacingAndGlyphs">超清</text>
<path d="M1429.500,79.200h9.600l-4.800,5.600z" fill="#fff"/>
<rect x="1473" y="62" width="40" height="40" rx="10" fill="#23292d" opacity=".88"/>
<rect x="1485" y="80.800" width="13.600" height="8.800" rx=".8" fill="none" stroke="#fff" stroke-width="1.900"/>
<path d="M1493.500,76.200q5.500,-.5 7.500,5.300" stroke="#fff" stroke-width="1.700" fill="none"/><path d="M1491.800,76.300l3.800,-2.900v5.600z" fill="#fff"/>
<rect x="1543" y="62" width="50" height="40" rx="10" fill="#1f262c" opacity=".95"/>
<circle cx="1555.600" cy="81.500" r="2.900" fill="#fff"/><circle cx="1563.300" cy="81.500" r="2.900" fill="#fff"/><circle cx="1571.200" cy="81.500" r="2.900" fill="#fff"/>
<circle cx="1581.500" cy="62" r="3.200" fill="#f03a3a"/>
<path d="M743,44h113v16.500q0,4.500 -4.500,4.500h-104q-4.500,0 -4.500,-4.500z" fill="#26272b"/>
<path d="M753,58v-3M756,58v-5M759,58v-7M762,58v-9" stroke="#19b955" stroke-width="1.700"/>
<text x="769.500" y="59" font-size="10.300" fill="#d4d5d8" textLength="39.500" lengthAdjust="spacing">00:18:06</text>
<path d="M814.500,51v8" stroke="#5a5b60" stroke-width="1"/>
<text x="820" y="59" font-size="10" fill="#d4d5d8" textLength="29.500" lengthAdjust="spacing">直播中</text>
<path d="M1406.0,385h17l8,8v25q0,1.500 -1.500,1.500h-23.500q-1.500,0 -1.500,-1.500v-32q0,-1.500 1.500,-1.500z" fill="#fbfbfc"/>
<path d="M1423.0,385l8,8h-6.500q-1.500,0 -1.500,-1.500z" fill="#e4e5e9"/>
<rect x="1400.800" y="389.500" width="17.500" height="16.500" rx="2" fill="#f2683a"/>
<text x="1409.800" y="402.800" font-size="14" font-weight="bold" fill="#fff" text-anchor="middle">P</text>
<rect x="1408" y="409.500" width="3.500" height="6" fill="none" stroke="#c9cbd0" stroke-width=".9"/><rect x="1414.500" y="409.500" width="13" height="6" fill="none" stroke="#c9cbd0" stroke-width=".9"/>
<text x="1418" y="435.3" font-size="10.400" fill="#fff" text-anchor="middle" filter="url(#ts)" textLength="60" lengthAdjust="spacing">软件技术专业</text>
<text x="1418" y="449.8" font-size="10.400" fill="#fff" text-anchor="middle" filter="url(#ts)" textLength="58" lengthAdjust="spacing">新生教育-2...</text>
<path d="M1406.0,468h17l8,8v25q0,1.500 -1.500,1.500h-23.500q-1.500,0 -1.500,-1.500v-32q0,-1.500 1.500,-1.500z" fill="#fbfbfc"/>
<path d="M1423.0,468l8,8h-6.500q-1.500,0 -1.500,-1.500z" fill="#e4e5e9"/>
<rect x="1401" y="472.500" width="17.500" height="16.500" rx="2" fill="#4a8af0"/>
<text x="1409.800" y="485.500" font-size="12.500" font-weight="bold" fill="#fff" text-anchor="middle">W</text>
<path d="M1409,492.500h18M1409,495.500h18M1409,498.500h18" stroke="#d5d7dc" stroke-width=".9"/>
<text x="1418" y="518.8" font-size="10.400" fill="#fff" text-anchor="middle" filter="url(#ts)" textLength="53" lengthAdjust="spacing">2022级软件</text>
<text x="1418" y="533.3" font-size="10.400" fill="#fff" text-anchor="middle" filter="url(#ts)" textLength="58" lengthAdjust="spacing">技术人才培...</text>
<path d="M1406.0,551.5h17l8,8v25q0,1.500 -1.500,1.500h-23.500q-1.500,0 -1.500,-1.500v-32q0,-1.500 1.500,-1.500z" fill="#fbfbfc"/>
<path d="M1423.0,551.5l8,8h-6.500q-1.500,0 -1.500,-1.500z" fill="#e4e5e9"/>
<rect x="1401" y="555.500" width="17.500" height="16.500" rx="2" fill="#3fb65a"/>
<text x="1409.800" y="568.800" font-size="14" font-weight="bold" fill="#fff" text-anchor="middle">S</text>
<rect x="1408.500" y="575.500" width="19" height="7.500" fill="none" stroke="#c9cbd0" stroke-width=".9"/><path d="M1408.500,579.200h19M1418,575.500v7.500" stroke="#c9cbd0" stroke-width=".9"/>
<text x="1418" y="602.3" font-size="10.400" fill="#fff" text-anchor="middle" filter="url(#ts)" textLength="52" lengthAdjust="spacing">22级人培方</text>
<text x="1418" y="616" font-size="10.400" fill="#fff" text-anchor="middle" filter="url(#ts)" textLength="31" lengthAdjust="spacing">案.xlsx</text>
<rect x="1280" y="854" width="85" height="32" rx="3" fill="#0b6a10"/>
<rect x="1292.800" y="855" width="43.500" height="15.500" fill="#178f1c"/>
<path d="M1281,870.800h83" stroke="#1a8a20" stroke-width=".8"/>
<path d="M1284.200,860.500l2.500,-2.300l2.500,2.300M1284.200,864.800l2.500,-2.300l2.500,2.300" stroke="#e8ffe8" stroke-width="1.200" fill="none"/>
<text x="1295" y="867.200" font-size="10.400" font-weight="bold" fill="#dcff78" textLength="38.500" lengthAdjust="spacing">五笔拼音</text>
<circle cx="1344.400" cy="862.800" r="3.300" fill="#fff"/><circle cx="1354.500" cy="861.500" r="1.300" fill="none" stroke="#fff" stroke-width=".9"/><path d="M1359.800,860.500q1.600,1.600 -.8,4" stroke="#fff" stroke-width="1.400" fill="none"/>
<path d="M1288,883q-3,-3.500 -3,-6l1.800,1.200l-.8,-4.500l1.300,-.3l1,3.500l.2,-4.500h1.300l.3,4.500l1.200,-3.800l1.200,.4l-.8,4.300l1.500,-2l1,.7q-1.500,3.500 -2,6.500z" fill="#f0fff0"/>
<circle cx="1304.500" cy="876.500" r="3.100" stroke="#f0fff0" stroke-width="1.400" fill="none"/><path d="M1306.800,878.800l4.800,3.600" stroke="#f0fff0" stroke-width="1.800" stroke-linecap="round"/>
<text x="1316.800" y="882.300" font-size="9.800" fill="#c8f2c8">简</text>
<text x="1330" y="882.300" font-size="10.500" font-weight="bold" fill="#c8f2c8" textLength="11.500" lengthAdjust="spacingAndGlyphs" font-family="Liberation Sans, sans-serif">GBK</text>
<rect x="1345.500" y="874" width="15.500" height="8" rx=".8" fill="#0f7a16" stroke="#2a9a32" stroke-width=".8"/><path d="M1347.500,876.500h11.500M1347.500,879.300h11.500" stroke="#2fa838" stroke-width=".9" stroke-dasharray="1.500 1"/>
</svg>
</body>
</html>
